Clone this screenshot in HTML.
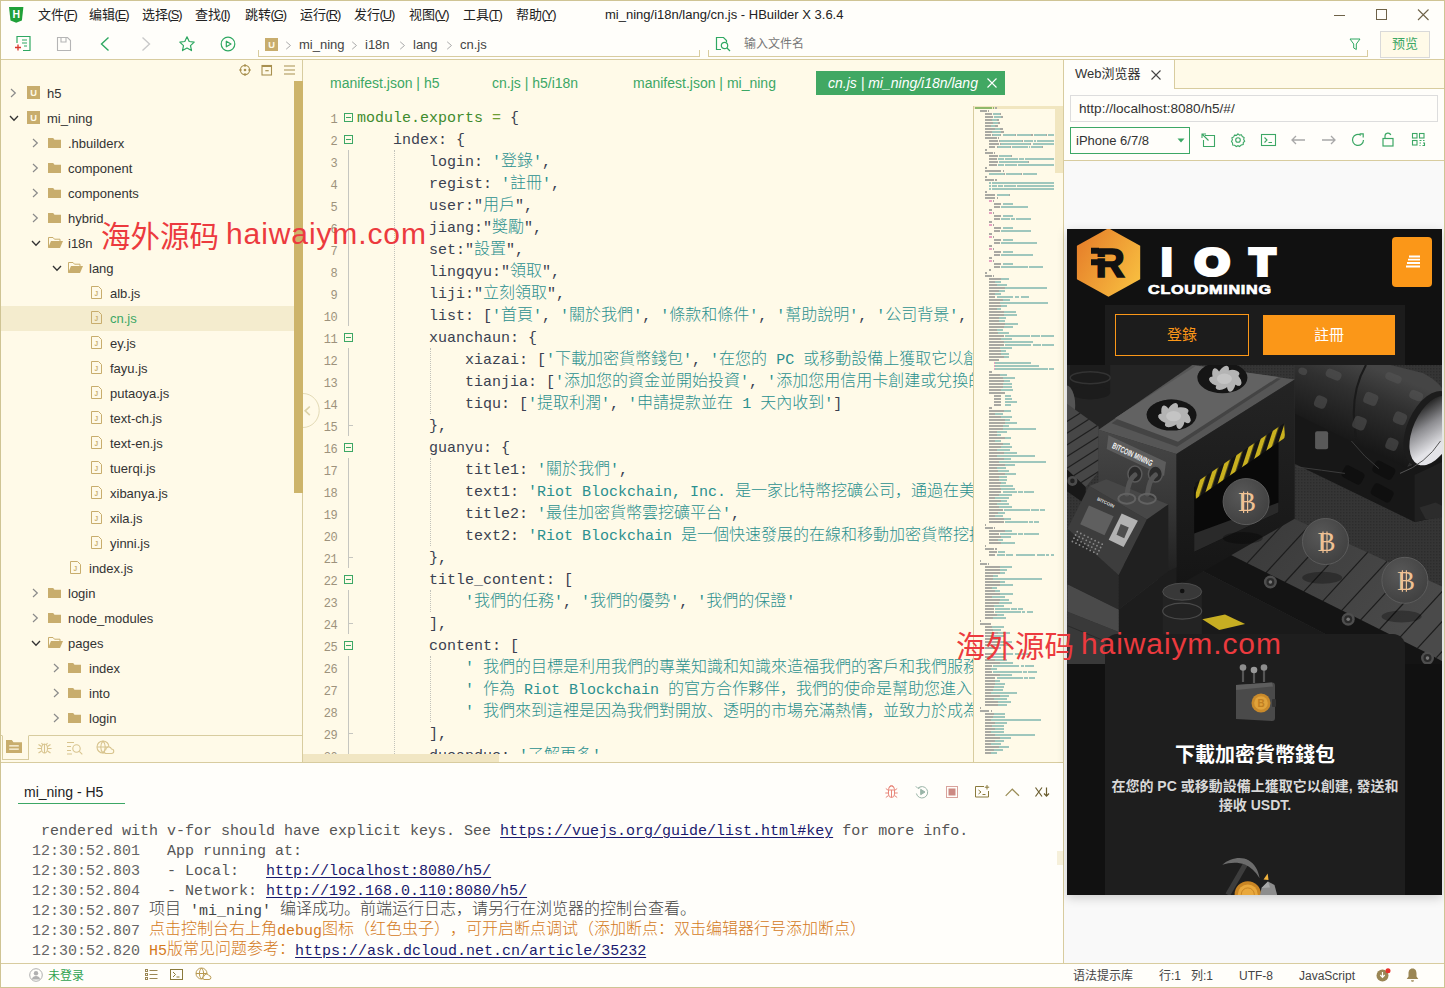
<!DOCTYPE html>
<html lang="zh"><head><meta charset="utf-8"><title>HBuilder X</title>
<style>

*{box-sizing:border-box;margin:0;padding:0}
html,body{width:1445px;height:988px;overflow:hidden;background:#fffefa}
body{font-family:"Liberation Sans","Noto Sans CJK SC",sans-serif;font-size:13px;color:#333}
#win{position:absolute;left:0;top:0;width:1445px;height:988px;overflow:hidden;background:#fffefa}
.abs{position:absolute}
.t{position:absolute;white-space:nowrap;line-height:20px;height:20px}
svg{position:absolute;overflow:visible}
.mono{font-family:"Liberation Mono","Noto Sans CJK TC",monospace}
/* window border */
#bt{left:0;top:0;width:1445px;height:1px;background:#cfc494}
#bl{left:0;top:0;width:1px;height:988px;background:#cfc494}
#br{left:1444px;top:0;width:1px;height:988px;background:#cfc494}
#bb{left:0;top:987px;width:1445px;height:1px;background:#cfc494}

#top{left:1px;top:1px;width:1443px;height:59px;background:#fffefa;border-bottom:1px solid #d8cc9f}
.menu{top:5px;font-size:13px;color:#222}
.menu span{letter-spacing:-1.1px;margin-left:-.5px}
.menu u{text-decoration:underline;text-underline-offset:1px}
#title{left:605px;top:5px;font-size:13px;color:#222}
.crumb{top:35px;font-size:13px;color:#444}
.sep{top:34px;font-size:13px;color:#999}
#crumbbox{left:258px;top:50px;width:442px;height:7px;border:1px solid #d8cc9f;border-top:none}
#searchbox{left:708px;top:50px;width:660px;height:7px;border:1px solid #d8cc9f;border-top:none}
#ph{left:744px;top:34px;font-size:12px;color:#777}
#preview{left:1380px;top:31px;width:50px;height:27px;background:#fffae8;border:1px solid #d9d9d9;color:#3ca765;font-size:13px;text-align:center;line-height:24px}

#left{left:1px;top:60px;width:302px;height:702px;background:#fffae8;border-right:1px solid #d8cc9f}
#sel{left:1px;top:306px;width:293px;height:25px;background:#f4ecce}
#lscroll{left:294px;top:81px;width:9px;height:412px;background:#cdb46a}
.tr{font-size:13px;color:#333}
#lbot{left:1px;top:735px;width:301px;height:27px;border-top:1px solid #d8cc9f;background:#fffae8}
#lbtab{left:2px;top:735px;width:27px;height:25px;background:#fffae8;border:1px solid #d8cc9f;border-top:1px solid #fffae8}
#lfoot{left:1px;top:762px;width:1062px;height:1px;background:#d8cc9f}

#ed{left:303px;top:60px;width:760px;height:702px;background:#fffae8}
.tab{top:73px;font-size:14px;color:#3ca765}
#atab{left:816px;top:71px;width:189px;height:24px;background:#41a863}
#atabt{left:828px;top:73px;font-size:14px;color:#fff;font-style:italic}
#code{left:304px;top:106px;width:669px;height:648px;overflow:hidden}
.ln{position:absolute;left:0;width:33px;text-align:right;font-size:12px;letter-spacing:-.600px;color:#9d927c;height:22px;line-height:28px;font-family:"Liberation Mono",monospace}
.cl{position:absolute;left:53px;margin-top:2px;white-space:pre;font-family:"Liberation Mono","Noto Sans CJK SC",monospace;font-size:15px;height:22px;line-height:22px;color:#3a4150}
.cl .k{text-spacing-trim:space-all;font-size:16px;line-height:0;position:relative;top:-.300px;font-weight:300;font-family:"Noto Sans CJK SC","Noto Sans CJK TC",sans-serif}
.s{color:#2b908f}
.g{color:#3e8b2e}
.o{color:#6f9d32}
.fb{position:absolute;left:40px;width:9px;height:9px;border:1px solid #3ca765;background:#fffae8;z-index:2}
.fb:after{content:"";position:absolute;left:1px;top:3px;width:5px;height:1px;background:#3ca765}
.fv{position:absolute;left:44px;width:1px;background:#c6c6c0}
.fe{position:absolute;left:44px;width:5px;height:1px;background:#c6c6c0}
.ig{position:absolute;width:0;border-left:1px dotted #c2c2ba}
#mmb{left:973px;top:106px;width:1px;height:656px;background:#d8cc9f}
#mmcur{left:974px;top:106px;width:81px;height:3px;background:#f1e6c0}
#mmth{left:1055px;top:106px;width:8px;height:67px;background:#f1e6c0}
#hs{left:303px;top:754px;width:670px;height:8px;background:#fffae8}
#hst{left:303px;top:754px;width:196px;height:8px;background:#f1e6c3}

#rp{left:1063px;top:60px;width:381px;height:903px;background:#f9f9f9;border-left:1px solid #d8cc9f}
#rtabs{left:1064px;top:60px;width:380px;height:29px;background:#fffae8;border-bottom:1px solid #d8cc9f}
#rtab{left:1064px;top:60px;width:111px;height:29px;background:#fffefa;border-right:1px solid #d8cc9f}
#rtabt{left:1075px;top:64px;font-size:13px;color:#333}
#rtool{left:1064px;top:89px;width:380px;height:72px;background:#fffefa;border-bottom:1px solid #d8cc9f}
#url{left:1070px;top:95px;width:368px;height:27px;border:1px solid #ddd;background:#fffefa;font-size:13.600px;color:#333;line-height:25px;padding-left:8px;white-space:nowrap}
#dev{left:1070px;top:127px;width:120px;height:27px;border:1px solid #3ca765;background:#fffefa;font-size:13px;color:#333;line-height:25px;padding-left:5px;white-space:nowrap}
#phone{left:1067px;top:229px;width:375px;height:666px;background:#111;overflow:hidden;box-shadow:0 3px 10px rgba(0,0,0,.180)}
#phone .abs,#phone .t{font-family:"Liberation Sans","Noto Sans CJK SC",sans-serif}
#iot{left:0;top:0;width:375px;height:70px}
#iot span{position:absolute;top:11.500px;font-size:36px;font-weight:bold;color:#fff;line-height:44px;height:44px;-webkit-text-stroke:4.200px #fff;transform-origin:0 50%;display:block}
#cm{left:81.200px;top:51.500px;font-size:13px;font-weight:bold;color:#fff;letter-spacing:.600px;line-height:18px;height:18px;-webkit-text-stroke:.700px #fff;transform:scaleX(1.240);transform-origin:0 50%}
#mbtn{left:325px;top:8px;width:40px;height:50px;background:#fb9718;border-radius:4px}
#bbar{left:38px;top:76px;width:300px;height:60px;background:#1c1c1c}
#blog{left:48px;top:85px;width:134px;height:42px;border:1px solid #fb9718;color:#fb9718;font-size:15px;text-align:center;line-height:40px}
#breg{left:196px;top:86px;width:132px;height:40px;background:#fb9718;color:#fff;font-size:15px;text-align:center;line-height:40px}
#card{left:38px;top:405px;width:300px;height:270px;background:#1e1e1e;border-radius:12px 12px 0 0}
#ctitle{left:38px;top:512px;width:300px;text-align:center;font-size:20px;font-weight:bold;color:#fff;line-height:28px;height:28px}
#cdesc{left:38px;top:548px;width:300px;text-align:center;font-size:14px;font-weight:bold;color:#d8d8d8;line-height:19px;height:40px;white-space:normal}

#con{left:1px;top:763px;width:1062px;height:200px;background:#fffefa}
#ctab{left:24px;top:782px;font-size:14px;color:#222}
#ctabu{left:18px;top:803px;width:107px;height:1px;background:#3ca765}
.lg{position:absolute;left:32px;white-space:pre;font-family:"Liberation Mono","Noto Sans CJK SC",monospace;font-size:15px;height:20px;line-height:20px;color:#555}
.lg .k{text-spacing-trim:space-all;font-weight:300;font-size:16px;line-height:0;position:relative;top:-1px;font-family:"Noto Sans CJK SC",sans-serif}
.lg a{color:#1a1a6e;text-decoration:underline;text-underline-offset:2px}
.lg .tm{color:#666}
.lg .or{color:#d47a1c}
.lg .dk{color:#444}
#status{left:1px;top:963px;width:1443px;height:24px;background:#fffefa;border-top:1px solid #d8cc9f}
.st{top:966px;font-size:12px;color:#444}
.wc{font-size:29.5px!important;letter-spacing:0!important}
.wm{position:absolute;white-space:nowrap;font-size:30px;letter-spacing:.9px;color:#ec3a3e;line-height:36px;height:36px;font-family:"Liberation Sans","Noto Sans CJK SC",sans-serif}
#cscr{left:1057px;top:851px;width:6px;height:14px;background:#f6f0da}

</style></head>
<body>
<div id="win">
<div class="abs" id="top"></div>
<svg style="left:9.300px;top:7px" width="14.400" height="15.800" viewBox="0 0 14.400 15.800"><path d="M0 0h14.400l-1.500 13.600-5.700 2.200-5.700-2.200z" fill="#1fa038"/><text x="7.200" y="11.300" font-size="10.500" font-weight="bold" fill="#fff" text-anchor="middle" font-family="Liberation Sans,sans-serif">H</text></svg>
<div class="t menu" style="left:38px">文件<span>(<u>F</u>)</span></div>
<div class="t menu" style="left:89px">编辑<span>(<u>E</u>)</span></div>
<div class="t menu" style="left:142px">选择<span>(<u>S</u>)</span></div>
<div class="t menu" style="left:195px">查找<span>(<u>I</u>)</span></div>
<div class="t menu" style="left:245px">跳转<span>(<u>G</u>)</span></div>
<div class="t menu" style="left:300px">运行<span>(<u>R</u>)</span></div>
<div class="t menu" style="left:354px">发行<span>(<u>U</u>)</span></div>
<div class="t menu" style="left:409px">视图<span>(<u>V</u>)</span></div>
<div class="t menu" style="left:463px">工具<span>(<u>T</u>)</span></div>
<div class="t menu" style="left:516px">帮助<span>(<u>Y</u>)</span></div>
<div class="t" id="title">mi_ning/i18n/lang/cn.js - HBuilder X 3.6.4</div>
<svg style="left:1334px;top:8px" width="100" height="14" viewBox="0 0 100 14"><path d="M0 7.5h11" stroke="#6e6248" stroke-width="1"/><rect x="42.5" y="1.5" width="10" height="10" fill="none" stroke="#6e6248" stroke-width="1"/><path d="M84 1.5l10.5 10.5M94.5 1.5l-10.5 10.5" stroke="#6e6248" stroke-width="1.1"/></svg>
<svg style="left:14px;top:35px" width="18" height="18" viewBox="0 0 18 18" fill="none"><path d="M3 8V1.5h13v14H9" stroke="#2fa862" stroke-width="1.2"/><path d="M8 5h5M8 8h5M10 11h3" stroke="#2fa862" stroke-width="1.1"/><path d="M1 12.5h6M4 9.5v6" stroke="#d9342b" stroke-width="1.3"/></svg>
<svg style="left:56px;top:36px" width="16" height="16" viewBox="0 0 16 16" fill="none"><path d="M1.5 1.5h10l3 3v10h-13z" stroke="#b5b5b5" stroke-width="1.1"/><path d="M5 1.5v4.5h5V1.5" stroke="#b5b5b5" stroke-width="1.1"/></svg>
<svg style="left:99px;top:36px" width="12" height="16" viewBox="0 0 12 16" fill="none"><path d="M9.5 1.5L2.5 8l7 6.5" stroke="#2fa862" stroke-width="1.4"/></svg>
<svg style="left:140px;top:36px" width="12" height="16" viewBox="0 0 12 16" fill="none"><path d="M2.5 1.5L9.5 8l-7 6.5" stroke="#c9c9c9" stroke-width="1.4"/></svg>
<svg style="left:178px;top:35px" width="18" height="18" viewBox="0 0 18 18" fill="none"><path d="M9 1.8l2.2 4.7 5 .6-3.7 3.5 1 5-4.5-2.5-4.5 2.5 1-5L1.8 7.1l5-.6z" stroke="#2fa862" stroke-width="1.2" stroke-linejoin="round"/></svg>
<svg style="left:220px;top:36px" width="16" height="16" viewBox="0 0 16 16" fill="none"><circle cx="8" cy="8" r="6.8" stroke="#2fa862" stroke-width="1.2"/><path d="M6.3 5.2v5.6L11 8z" stroke="#2fa862" stroke-width="1.2" stroke-linejoin="round"/></svg>
<div class="abs" id="crumbbox"></div><div class="abs" id="searchbox"></div>
<svg style="left:265px;top:37.500px" width="13" height="13" viewBox="0 0 14 14"><rect width="14" height="14" fill="#c8ad6d"/><text x="7" y="10.800" font-size="10" font-weight="bold" fill="#fffae8" text-anchor="middle" font-family="Liberation Sans,sans-serif">U</text></svg>
<div class="t crumb" style="left:299px">mi_ning</div><div class="t crumb" style="left:365px">i18n</div><div class="t crumb" style="left:413px">lang</div><div class="t crumb" style="left:460px">cn.js</div><svg style="left:285px;top:40.500px" width="7" height="9" viewBox="0 0 7 9" fill="none"><path d="M1.200 0.800l4.300 3.700-4.300 3.700" stroke="#aaa" stroke-width="1"/></svg><svg style="left:351px;top:40.500px" width="7" height="9" viewBox="0 0 7 9" fill="none"><path d="M1.200 0.800l4.300 3.700-4.300 3.700" stroke="#aaa" stroke-width="1"/></svg><svg style="left:399px;top:40.500px" width="7" height="9" viewBox="0 0 7 9" fill="none"><path d="M1.200 0.800l4.300 3.700-4.300 3.700" stroke="#aaa" stroke-width="1"/></svg><svg style="left:446px;top:40.500px" width="7" height="9" viewBox="0 0 7 9" fill="none"><path d="M1.200 0.800l4.300 3.700-4.300 3.700" stroke="#aaa" stroke-width="1"/></svg>
<svg style="left:715px;top:36px" width="17" height="16" viewBox="0 0 17 16" fill="none"><path d="M6 13.5H1.5v-12h7l3 3V6" stroke="#2fa862" stroke-width="1.2"/><circle cx="9.5" cy="9.5" r="3.2" stroke="#2fa862" stroke-width="1.2"/><path d="M12 12l3 3" stroke="#2fa862" stroke-width="1.2"/></svg>
<div class="t" id="ph">输入文件名</div>
<svg style="left:1349px;top:38px" width="12" height="13" viewBox="0 0 12 13" fill="none"><path d="M1 1h10L7.3 6v5.5L4.7 10V6z" stroke="#2fa862" stroke-width="1"/></svg>
<div class="abs" id="preview">预览</div>
<div class="abs" id="left"></div><div class="abs" id="sel"></div><div class="abs" id="lscroll"></div>
<svg style="left:239px;top:64px" width="12" height="12" viewBox="0 0 12 12" fill="none"><circle cx="6" cy="6" r="4.6" stroke="#a89050" stroke-width="1.1"/><circle cx="6" cy="6" r="1.3" fill="#a89050"/><path d="M6 0v3M6 9v3M0 6h3M9 6h3" stroke="#a89050" stroke-width="1.1"/></svg>
<svg style="left:261px;top:64px" width="12" height="12" viewBox="0 0 12 12" fill="none"><rect x="1" y="1.5" width="9.5" height="9.5" stroke="#a89050" stroke-width="1.1"/><path d="M1 2h9.5" stroke="#a89050" stroke-width="2"/><path d="M4.3 6.7h3.4" stroke="#a89050" stroke-width="1.2"/></svg>
<svg style="left:284px;top:65px" width="11" height="10" viewBox="0 0 11 10" fill="none"><path d="M0 1h11M0 5h11M0 9h11" stroke="#a89050" stroke-width="1.2"/></svg>
<svg style="left:10px;top:88px" width="7" height="10" viewBox="0 0 7 10" fill="none"><path d="M1 1l4.3 4L1 9" stroke="#8a8a8a" stroke-width="1.2"/></svg><svg style="left:27px;top:86px" width="13" height="13" viewBox="0 0 14 14"><rect width="14" height="14" fill="#c8ad6d"/><text x="7" y="10.800" font-size="10" font-weight="bold" fill="#fffae8" text-anchor="middle" font-family="Liberation Sans,sans-serif">U</text></svg><div class="t tr" style="left:47px;top:84px">h5</div>
<svg style="left:9px;top:115px" width="10" height="7" viewBox="0 0 10 7" fill="none"><path d="M1 1l4 4.3L9 1" stroke="#333" stroke-width="1.3"/></svg><svg style="left:27px;top:111px" width="13" height="13" viewBox="0 0 14 14"><rect width="14" height="14" fill="#c8ad6d"/><text x="7" y="10.800" font-size="10" font-weight="bold" fill="#fffae8" text-anchor="middle" font-family="Liberation Sans,sans-serif">U</text></svg><div class="t tr" style="left:47px;top:109px">mi_ning</div>
<svg style="left:32px;top:138px" width="7" height="10" viewBox="0 0 7 10" fill="none"><path d="M1 1l4.3 4L1 9" stroke="#8a8a8a" stroke-width="1.2"/></svg><svg style="left:48px;top:138px" width="13" height="10" viewBox="0 0 13 10"><path d="M0 0h5.2l1.3 1.8H13V10H0z" fill="#c8ad6d"/></svg><div class="t tr" style="left:68px;top:134px">.hbuilderx</div>
<svg style="left:32px;top:163px" width="7" height="10" viewBox="0 0 7 10" fill="none"><path d="M1 1l4.3 4L1 9" stroke="#8a8a8a" stroke-width="1.2"/></svg><svg style="left:48px;top:163px" width="13" height="10" viewBox="0 0 13 10"><path d="M0 0h5.2l1.3 1.8H13V10H0z" fill="#c8ad6d"/></svg><div class="t tr" style="left:68px;top:159px">component</div>
<svg style="left:32px;top:188px" width="7" height="10" viewBox="0 0 7 10" fill="none"><path d="M1 1l4.3 4L1 9" stroke="#8a8a8a" stroke-width="1.2"/></svg><svg style="left:48px;top:188px" width="13" height="10" viewBox="0 0 13 10"><path d="M0 0h5.2l1.3 1.8H13V10H0z" fill="#c8ad6d"/></svg><div class="t tr" style="left:68px;top:184px">components</div>
<svg style="left:32px;top:213px" width="7" height="10" viewBox="0 0 7 10" fill="none"><path d="M1 1l4.3 4L1 9" stroke="#8a8a8a" stroke-width="1.2"/></svg><svg style="left:48px;top:213px" width="13" height="10" viewBox="0 0 13 10"><path d="M0 0h5.2l1.3 1.8H13V10H0z" fill="#c8ad6d"/></svg><div class="t tr" style="left:68px;top:209px">hybrid</div>
<svg style="left:31px;top:240px" width="10" height="7" viewBox="0 0 10 7" fill="none"><path d="M1 1l4 4.3L9 1" stroke="#333" stroke-width="1.3"/></svg><svg style="left:48px;top:237px" width="15" height="11" viewBox="0 0 15 11"><path d="M0.5 10.5V0.5h4.5l1.5 1.7h5.5v2" fill="none" stroke="#c8ad6d" stroke-width="1"/><path d="M0 11L3 4h12L12 11z" fill="#c8ad6d"/></svg><div class="t tr" style="left:68px;top:234px">i18n</div>
<svg style="left:52px;top:265px" width="10" height="7" viewBox="0 0 10 7" fill="none"><path d="M1 1l4 4.3L9 1" stroke="#333" stroke-width="1.3"/></svg><svg style="left:68px;top:262px" width="15" height="11" viewBox="0 0 15 11"><path d="M0.5 10.5V0.5h4.5l1.5 1.7h5.5v2" fill="none" stroke="#c8ad6d" stroke-width="1"/><path d="M0 11L3 4h12L12 11z" fill="#c8ad6d"/></svg><div class="t tr" style="left:89px;top:259px">lang</div>
<svg style="left:91px;top:286px" width="11" height="13" viewBox="0 0 11 13" fill="none"><path d="M0.5 0.5h7l3 3v9h-10z" stroke="#c8ad6d" stroke-width="1"/><text x="5.300" y="9.600" font-size="6.500" font-weight="bold" fill="#c8ad6d" stroke="none" text-anchor="middle" font-family="Liberation Sans,sans-serif">J</text></svg><div class="t tr" style="left:110px;top:284px">alb.js</div>
<svg style="left:91px;top:311px" width="11" height="13" viewBox="0 0 11 13" fill="none"><path d="M0.5 0.5h7l3 3v9h-10z" stroke="#c8ad6d" stroke-width="1"/><text x="5.300" y="9.600" font-size="6.500" font-weight="bold" fill="#c8ad6d" stroke="none" text-anchor="middle" font-family="Liberation Sans,sans-serif">J</text></svg><div class="t tr" style="left:110px;top:309px;color:#3ca765">cn.js</div>
<svg style="left:91px;top:336px" width="11" height="13" viewBox="0 0 11 13" fill="none"><path d="M0.5 0.5h7l3 3v9h-10z" stroke="#c8ad6d" stroke-width="1"/><text x="5.300" y="9.600" font-size="6.500" font-weight="bold" fill="#c8ad6d" stroke="none" text-anchor="middle" font-family="Liberation Sans,sans-serif">J</text></svg><div class="t tr" style="left:110px;top:334px">ey.js</div>
<svg style="left:91px;top:361px" width="11" height="13" viewBox="0 0 11 13" fill="none"><path d="M0.5 0.5h7l3 3v9h-10z" stroke="#c8ad6d" stroke-width="1"/><text x="5.300" y="9.600" font-size="6.500" font-weight="bold" fill="#c8ad6d" stroke="none" text-anchor="middle" font-family="Liberation Sans,sans-serif">J</text></svg><div class="t tr" style="left:110px;top:359px">fayu.js</div>
<svg style="left:91px;top:386px" width="11" height="13" viewBox="0 0 11 13" fill="none"><path d="M0.5 0.5h7l3 3v9h-10z" stroke="#c8ad6d" stroke-width="1"/><text x="5.300" y="9.600" font-size="6.500" font-weight="bold" fill="#c8ad6d" stroke="none" text-anchor="middle" font-family="Liberation Sans,sans-serif">J</text></svg><div class="t tr" style="left:110px;top:384px">putaoya.js</div>
<svg style="left:91px;top:411px" width="11" height="13" viewBox="0 0 11 13" fill="none"><path d="M0.5 0.5h7l3 3v9h-10z" stroke="#c8ad6d" stroke-width="1"/><text x="5.300" y="9.600" font-size="6.500" font-weight="bold" fill="#c8ad6d" stroke="none" text-anchor="middle" font-family="Liberation Sans,sans-serif">J</text></svg><div class="t tr" style="left:110px;top:409px">text-ch.js</div>
<svg style="left:91px;top:436px" width="11" height="13" viewBox="0 0 11 13" fill="none"><path d="M0.5 0.5h7l3 3v9h-10z" stroke="#c8ad6d" stroke-width="1"/><text x="5.300" y="9.600" font-size="6.500" font-weight="bold" fill="#c8ad6d" stroke="none" text-anchor="middle" font-family="Liberation Sans,sans-serif">J</text></svg><div class="t tr" style="left:110px;top:434px">text-en.js</div>
<svg style="left:91px;top:461px" width="11" height="13" viewBox="0 0 11 13" fill="none"><path d="M0.5 0.5h7l3 3v9h-10z" stroke="#c8ad6d" stroke-width="1"/><text x="5.300" y="9.600" font-size="6.500" font-weight="bold" fill="#c8ad6d" stroke="none" text-anchor="middle" font-family="Liberation Sans,sans-serif">J</text></svg><div class="t tr" style="left:110px;top:459px">tuerqi.js</div>
<svg style="left:91px;top:486px" width="11" height="13" viewBox="0 0 11 13" fill="none"><path d="M0.5 0.5h7l3 3v9h-10z" stroke="#c8ad6d" stroke-width="1"/><text x="5.300" y="9.600" font-size="6.500" font-weight="bold" fill="#c8ad6d" stroke="none" text-anchor="middle" font-family="Liberation Sans,sans-serif">J</text></svg><div class="t tr" style="left:110px;top:484px">xibanya.js</div>
<svg style="left:91px;top:511px" width="11" height="13" viewBox="0 0 11 13" fill="none"><path d="M0.5 0.5h7l3 3v9h-10z" stroke="#c8ad6d" stroke-width="1"/><text x="5.300" y="9.600" font-size="6.500" font-weight="bold" fill="#c8ad6d" stroke="none" text-anchor="middle" font-family="Liberation Sans,sans-serif">J</text></svg><div class="t tr" style="left:110px;top:509px">xila.js</div>
<svg style="left:91px;top:536px" width="11" height="13" viewBox="0 0 11 13" fill="none"><path d="M0.5 0.5h7l3 3v9h-10z" stroke="#c8ad6d" stroke-width="1"/><text x="5.300" y="9.600" font-size="6.500" font-weight="bold" fill="#c8ad6d" stroke="none" text-anchor="middle" font-family="Liberation Sans,sans-serif">J</text></svg><div class="t tr" style="left:110px;top:534px">yinni.js</div>
<svg style="left:70px;top:561px" width="11" height="13" viewBox="0 0 11 13" fill="none"><path d="M0.5 0.5h7l3 3v9h-10z" stroke="#c8ad6d" stroke-width="1"/><text x="5.300" y="9.600" font-size="6.500" font-weight="bold" fill="#c8ad6d" stroke="none" text-anchor="middle" font-family="Liberation Sans,sans-serif">J</text></svg><div class="t tr" style="left:89px;top:559px">index.js</div>
<svg style="left:32px;top:588px" width="7" height="10" viewBox="0 0 7 10" fill="none"><path d="M1 1l4.3 4L1 9" stroke="#8a8a8a" stroke-width="1.2"/></svg><svg style="left:48px;top:588px" width="13" height="10" viewBox="0 0 13 10"><path d="M0 0h5.2l1.3 1.8H13V10H0z" fill="#c8ad6d"/></svg><div class="t tr" style="left:68px;top:584px">login</div>
<svg style="left:32px;top:613px" width="7" height="10" viewBox="0 0 7 10" fill="none"><path d="M1 1l4.3 4L1 9" stroke="#8a8a8a" stroke-width="1.2"/></svg><svg style="left:48px;top:613px" width="13" height="10" viewBox="0 0 13 10"><path d="M0 0h5.2l1.3 1.8H13V10H0z" fill="#c8ad6d"/></svg><div class="t tr" style="left:68px;top:609px">node_modules</div>
<svg style="left:31px;top:640px" width="10" height="7" viewBox="0 0 10 7" fill="none"><path d="M1 1l4 4.3L9 1" stroke="#333" stroke-width="1.3"/></svg><svg style="left:48px;top:637px" width="15" height="11" viewBox="0 0 15 11"><path d="M0.5 10.5V0.5h4.5l1.5 1.7h5.5v2" fill="none" stroke="#c8ad6d" stroke-width="1"/><path d="M0 11L3 4h12L12 11z" fill="#c8ad6d"/></svg><div class="t tr" style="left:68px;top:634px">pages</div>
<svg style="left:53px;top:663px" width="7" height="10" viewBox="0 0 7 10" fill="none"><path d="M1 1l4.3 4L1 9" stroke="#8a8a8a" stroke-width="1.2"/></svg><svg style="left:68px;top:663px" width="13" height="10" viewBox="0 0 13 10"><path d="M0 0h5.2l1.3 1.8H13V10H0z" fill="#c8ad6d"/></svg><div class="t tr" style="left:89px;top:659px">index</div>
<svg style="left:53px;top:688px" width="7" height="10" viewBox="0 0 7 10" fill="none"><path d="M1 1l4.3 4L1 9" stroke="#8a8a8a" stroke-width="1.2"/></svg><svg style="left:68px;top:688px" width="13" height="10" viewBox="0 0 13 10"><path d="M0 0h5.2l1.3 1.8H13V10H0z" fill="#c8ad6d"/></svg><div class="t tr" style="left:89px;top:684px">into</div>
<svg style="left:53px;top:713px" width="7" height="10" viewBox="0 0 7 10" fill="none"><path d="M1 1l4.3 4L1 9" stroke="#8a8a8a" stroke-width="1.2"/></svg><svg style="left:68px;top:713px" width="13" height="10" viewBox="0 0 13 10"><path d="M0 0h5.2l1.3 1.8H13V10H0z" fill="#c8ad6d"/></svg><div class="t tr" style="left:89px;top:709px">login</div>
<div class="abs" id="lbot"></div><div class="abs" id="lbtab"></div><div class="abs" id="lfoot"></div>
<svg style="left:6px;top:740px" width="16" height="13" viewBox="0 0 15 12"><path d="M0 0h5.5l1.5 2H15v10H0z" fill="#c8ad6d"/><path d="M3 5.5h9M3 8.5h9" stroke="#fffae8" stroke-width="1.2"/></svg>
<svg style="left:37px;top:740px" width="15" height="15" viewBox="0 0 15 15" fill="none" stroke="#d8c48e" stroke-width="1.1"><ellipse cx="7.5" cy="8.5" rx="3" ry="4.5"/><path d="M7.5 4v9M4.5 3l1.5 2M10.500 3l-1.5 2M0.500 8.500h4M10.500 8.500h4M1.500 4.500l3 2M13.500 4.500l-3 2M1.500 13l3-2M13.500 13l-3-2"/></svg>
<svg style="left:67px;top:741px" width="16" height="14" viewBox="0 0 16 14" fill="none" stroke="#d8c48e" stroke-width="1.1"><path d="M0 1.500h7M0 5.500h4M0 9.500h4M0 13h5"/><circle cx="9.500" cy="7.500" r="3.700"/><path d="M12.300 10.300l3 3"/></svg>
<svg style="left:96px;top:740px" width="18" height="15" viewBox="0 0 18 15" fill="none" stroke="#d8c48e" stroke-width="1.1"><circle cx="7" cy="7" r="6"/><path d="M1 7h12M7 1c-3 3-3 9 0 12M7 1c3 3 3 9 0 12"/><path d="M9.500 13.500h6a2 2 0 0 0 0-4.500a3 3 0 0 0-5.800 0.800a2 2 0 0 0-0.200 3.700z" fill="#fffae8"/></svg>
<div class="abs" id="ed"></div>
<div class="t tab" style="left:330px">manifest.json | h5</div><div class="t tab" style="left:492px">cn.js | h5/i18n</div><div class="t tab" style="left:633px">manifest.json | mi_ning</div>
<div class="abs" id="atab"></div><div class="t" id="atabt">cn.js | mi_ning/i18n/lang</div><svg style="left:987px;top:78px" width="10" height="10" viewBox="0 0 10 10"><path d="M0.500 0.500l9 9M9.500 0.500l-9 9" stroke="#fff" stroke-width="1.1"/></svg>
<div class="abs" id="code"><div class="ln" style="top:0px">1</div><div class="fb" style="top:7px"></div><div class="cl" style="top:0px"><span class="g">module.exports</span> <span class="o">=</span> {</div>
<div class="ln" style="top:22px">2</div><div class="fb" style="top:29px"></div><div class="cl" style="top:22px">    index: {</div>
<div class="ln" style="top:44px">3</div><div class="cl" style="top:44px">        login: <span class="s">'<span class="k">登錄</span>'</span>,</div>
<div class="ln" style="top:66px">4</div><div class="cl" style="top:66px">        regist: <span class="s">'<span class="k">註冊</span>'</span>,</div>
<div class="ln" style="top:88px">5</div><div class="cl" style="top:88px">        user:"<span class="s"><span class="k">用戶</span></span>",</div>
<div class="ln" style="top:110px">6</div><div class="cl" style="top:110px">        jiang:"<span class="s"><span class="k">獎勵</span></span>",</div>
<div class="ln" style="top:132px">7</div><div class="cl" style="top:132px">        set:"<span class="s"><span class="k">設置</span></span>",</div>
<div class="ln" style="top:154px">8</div><div class="cl" style="top:154px">        lingqyu:"<span class="s"><span class="k">領取</span></span>",</div>
<div class="ln" style="top:176px">9</div><div class="cl" style="top:176px">        liji:"<span class="s"><span class="k">立刻領取</span></span>",</div>
<div class="ln" style="top:198px">10</div><div class="cl" style="top:198px">        list: [<span class="s">'<span class="k">首頁</span>'</span>, <span class="s">'<span class="k">關於我們</span>'</span>, <span class="s">'<span class="k">條款和條件</span>'</span>, <span class="s">'<span class="k">幫助說明</span>'</span>, <span class="s">'<span class="k">公司背景</span>'</span>, <span class="s">'<span class="k">條款和條件</span>'</span>, <span class="s">'<span class="k">幫助說明</span>'</span>],</div>
<div class="ln" style="top:220px">11</div><div class="fb" style="top:227px"></div><div class="cl" style="top:220px">        xuanchaun: {</div>
<div class="ln" style="top:242px">12</div><div class="cl" style="top:242px">            xiazai: [<span class="s">'<span class="k">下載加密貨幣錢包</span>'</span>, <span class="s">'<span class="k">在您的</span> PC <span class="k">或移動設備上獲取它以創建</span>, <span class="k">發送和接收</span> USDT.'</span>],</div>
<div class="ln" style="top:264px">13</div><div class="cl" style="top:264px">            tianjia: [<span class="s">'<span class="k">添加您的資金並開始投資</span>'</span>, <span class="s">'<span class="k">添加您用信用卡創建或兌換的資金</span>, <span class="k">並開始投資</span>'</span>],</div>
<div class="ln" style="top:286px">14</div><div class="cl" style="top:286px">            tiqu: [<span class="s">'<span class="k">提取利潤</span>'</span>, <span class="s">'<span class="k">申請提款並在</span> 1 <span class="k">天內收到</span>'</span>]</div>
<div class="ln" style="top:308px">15</div><div class="fe" style="top:319px"></div><div class="cl" style="top:308px">        },</div>
<div class="ln" style="top:330px">16</div><div class="fb" style="top:337px"></div><div class="cl" style="top:330px">        guanyu: {</div>
<div class="ln" style="top:352px">17</div><div class="cl" style="top:352px">            title1: <span class="s">'<span class="k">關於我們</span>'</span>,</div>
<div class="ln" style="top:374px">18</div><div class="cl" style="top:374px">            text1: <span class="s">'Riot Blockchain, Inc. <span class="k">是一家比特幣挖礦公司，通過在美國擴大大規模挖礦，支持比特幣區塊鏈</span>',</span></div>
<div class="ln" style="top:396px">19</div><div class="cl" style="top:396px">            title2: <span class="s">'<span class="k">最佳加密貨幣雲挖礦平台</span>'</span>,</div>
<div class="ln" style="top:418px">20</div><div class="cl" style="top:418px">            text2: <span class="s">'Riot Blockchain <span class="k">是一個快速發展的在線和移動加密貨幣挖掘平台，允許用戶挖掘加密貨幣</span>',</span></div>
<div class="ln" style="top:440px">21</div><div class="fe" style="top:451px"></div><div class="cl" style="top:440px">        },</div>
<div class="ln" style="top:462px">22</div><div class="fb" style="top:469px"></div><div class="cl" style="top:462px">        title_content: [</div>
<div class="ln" style="top:484px">23</div><div class="cl" style="top:484px">            <span class="s">'<span class="k">我們的任務</span>'</span>, <span class="s">'<span class="k">我們的優勢</span>'</span>, <span class="s">'<span class="k">我們的保證</span>'</span></div>
<div class="ln" style="top:506px">24</div><div class="fe" style="top:517px"></div><div class="cl" style="top:506px">        ],</div>
<div class="ln" style="top:528px">25</div><div class="fb" style="top:535px"></div><div class="cl" style="top:528px">        content: [</div>
<div class="ln" style="top:550px">26</div><div class="cl" style="top:550px">            <span class="s">' <span class="k">我們的目標是利用我們的專業知識和知識來造福我們的客戶和我們服務的全球社區。</span>',</span></div>
<div class="ln" style="top:572px">27</div><div class="cl" style="top:572px">            <span class="s">' <span class="k">作為</span> Riot Blockchain <span class="k">的官方合作夥伴，我們的使命是幫助您進入並更好地了解加密貨幣世界</span>',</span></div>
<div class="ln" style="top:594px">28</div><div class="cl" style="top:594px">            <span class="s">' <span class="k">我們來到這裡是因為我們對開放、透明的市場充滿熱情，並致力於成為值得信賴的合作夥伴</span>',</span></div>
<div class="ln" style="top:616px">29</div><div class="fe" style="top:627px"></div><div class="cl" style="top:616px">        ],</div>
<div class="ln" style="top:638px">30</div><div class="cl" style="top:638px">        duoanduo: <span class="s">'<span class="k">了解更多</span>'</span>,</div>
<div class="fv" style="top:44px;height:176px"></div><div class="fv" style="top:242px;height:88px"></div><div class="fv" style="top:352px;height:110px"></div><div class="fv" style="top:484px;height:44px"></div><div class="fv" style="top:550px;height:110px"></div><div class="ig" style="left:90px;top:44px;height:610px"></div><div class="ig" style="left:126px;top:242px;height:66px"></div><div class="ig" style="left:126px;top:352px;height:88px"></div><div class="ig" style="left:126px;top:484px;height:22px"></div><div class="ig" style="left:126px;top:550px;height:66px"></div></div>
<div class="abs" id="mmb"></div><div class="abs" id="mmcur"></div><div class="abs" id="mmth"></div><div class="abs" id="hs"></div><div class="abs" id="hst"></div>
<svg style="left:0;top:0" width="1445" height="988" viewBox="0 0 1445 988" shape-rendering="crispEdges"><rect x="975.0" y="107" width="16.8" height="2" fill="#8fb86a"/><rect x="993.0" y="107" width="1.2" height="2" fill="#8fb86a"/><rect x="995.4" y="107" width="1.2" height="2" fill="#a9a9a3"/><rect x="979.8" y="110" width="7.2" height="2" fill="#a9a9a3"/><rect x="988.2" y="110" width="1.2" height="2" fill="#a9a9a3"/><rect x="984.6" y="113" width="7.2" height="2" fill="#a9a9a3"/><rect x="993.0" y="113" width="7.2" height="2" fill="#9fc7bd"/><rect x="1000.2" y="113" width="1.2" height="2" fill="#a9a9a3"/><rect x="984.6" y="116" width="8.4" height="2" fill="#a9a9a3"/><rect x="994.2" y="116" width="7.2" height="2" fill="#9fc7bd"/><rect x="1001.4" y="116" width="1.2" height="2" fill="#a9a9a3"/><rect x="984.6" y="119" width="7.2" height="2" fill="#a9a9a3"/><rect x="991.8" y="119" width="4.8" height="2" fill="#9fc7bd"/><rect x="996.6" y="119" width="2.4" height="2" fill="#a9a9a3"/><rect x="984.6" y="122" width="8.4" height="2" fill="#a9a9a3"/><rect x="993.0" y="122" width="4.8" height="2" fill="#9fc7bd"/><rect x="997.8" y="122" width="2.4" height="2" fill="#a9a9a3"/><rect x="984.6" y="125" width="6.0" height="2" fill="#a9a9a3"/><rect x="990.6" y="125" width="4.8" height="2" fill="#9fc7bd"/><rect x="995.4" y="125" width="2.4" height="2" fill="#a9a9a3"/><rect x="984.6" y="128" width="10.8" height="2" fill="#a9a9a3"/><rect x="995.4" y="128" width="4.8" height="2" fill="#9fc7bd"/><rect x="1000.2" y="128" width="2.4" height="2" fill="#a9a9a3"/><rect x="984.6" y="131" width="7.2" height="2" fill="#a9a9a3"/><rect x="991.8" y="131" width="9.6" height="2" fill="#9fc7bd"/><rect x="1001.4" y="131" width="2.4" height="2" fill="#a9a9a3"/><rect x="984.6" y="134" width="6.0" height="2" fill="#a9a9a3"/><rect x="991.8" y="134" width="1.2" height="2" fill="#a9a9a3"/><rect x="993.0" y="134" width="7.2" height="2" fill="#9fc7bd"/><rect x="1000.2" y="134" width="1.2" height="2" fill="#a9a9a3"/><rect x="1002.6" y="134" width="12.0" height="2" fill="#9fc7bd"/><rect x="1014.6" y="134" width="1.2" height="2" fill="#a9a9a3"/><rect x="1017.0" y="134" width="14.4" height="2" fill="#9fc7bd"/><rect x="1031.4" y="134" width="1.2" height="2" fill="#a9a9a3"/><rect x="1033.8" y="134" width="12.0" height="2" fill="#9fc7bd"/><rect x="1045.8" y="134" width="1.2" height="2" fill="#a9a9a3"/><rect x="1048.2" y="134" width="5.8" height="2" fill="#9fc7bd"/><rect x="984.6" y="137" width="12.0" height="2" fill="#a9a9a3"/><rect x="997.8" y="137" width="1.2" height="2" fill="#a9a9a3"/><rect x="989.4" y="140" width="8.4" height="2" fill="#a9a9a3"/><rect x="999.0" y="140" width="1.2" height="2" fill="#a9a9a3"/><rect x="1000.2" y="140" width="21.6" height="2" fill="#9fc7bd"/><rect x="1021.8" y="140" width="1.2" height="2" fill="#a9a9a3"/><rect x="1024.2" y="140" width="8.4" height="2" fill="#9fc7bd"/><rect x="1033.8" y="140" width="2.4" height="2" fill="#9fc7bd"/><rect x="1037.4" y="140" width="16.6" height="2" fill="#9fc7bd"/><rect x="989.4" y="143" width="9.6" height="2" fill="#a9a9a3"/><rect x="1000.2" y="143" width="1.2" height="2" fill="#a9a9a3"/><rect x="1001.4" y="143" width="28.8" height="2" fill="#9fc7bd"/><rect x="1030.2" y="143" width="1.2" height="2" fill="#a9a9a3"/><rect x="1032.6" y="143" width="21.4" height="2" fill="#9fc7bd"/><rect x="989.4" y="146" width="6.0" height="2" fill="#a9a9a3"/><rect x="996.6" y="146" width="1.2" height="2" fill="#a9a9a3"/><rect x="997.8" y="146" width="12.0" height="2" fill="#9fc7bd"/><rect x="1009.8" y="146" width="1.2" height="2" fill="#a9a9a3"/><rect x="1012.2" y="146" width="15.6" height="2" fill="#9fc7bd"/><rect x="1029.0" y="146" width="1.2" height="2" fill="#9fc7bd"/><rect x="1031.4" y="146" width="10.8" height="2" fill="#9fc7bd"/><rect x="1042.2" y="146" width="1.2" height="2" fill="#a9a9a3"/><rect x="984.6" y="149" width="2.4" height="2" fill="#a9a9a3"/><rect x="984.6" y="152" width="8.4" height="2" fill="#a9a9a3"/><rect x="994.2" y="152" width="1.2" height="2" fill="#a9a9a3"/><rect x="989.4" y="155" width="8.4" height="2" fill="#a9a9a3"/><rect x="999.0" y="155" width="12.0" height="2" fill="#9fc7bd"/><rect x="1011.0" y="155" width="1.2" height="2" fill="#a9a9a3"/><rect x="989.4" y="158" width="7.2" height="2" fill="#a9a9a3"/><rect x="997.8" y="158" width="6.0" height="2" fill="#9fc7bd"/><rect x="1005.0" y="158" width="13.2" height="2" fill="#9fc7bd"/><rect x="1019.4" y="158" width="4.8" height="2" fill="#9fc7bd"/><rect x="1025.4" y="158" width="28.6" height="2" fill="#9fc7bd"/><rect x="989.4" y="161" width="8.4" height="2" fill="#a9a9a3"/><rect x="999.0" y="161" width="28.8" height="2" fill="#9fc7bd"/><rect x="1027.8" y="161" width="1.2" height="2" fill="#a9a9a3"/><rect x="989.4" y="164" width="7.2" height="2" fill="#a9a9a3"/><rect x="997.8" y="164" width="6.0" height="2" fill="#9fc7bd"/><rect x="1005.0" y="164" width="12.0" height="2" fill="#9fc7bd"/><rect x="1018.2" y="164" width="35.8" height="2" fill="#9fc7bd"/><rect x="984.6" y="167" width="2.4" height="2" fill="#a9a9a3"/><rect x="984.6" y="170" width="16.8" height="2" fill="#a9a9a3"/><rect x="1002.6" y="170" width="1.2" height="2" fill="#a9a9a3"/><rect x="989.4" y="173" width="14.4" height="2" fill="#9fc7bd"/><rect x="1003.8" y="173" width="1.2" height="2" fill="#a9a9a3"/><rect x="1006.2" y="173" width="14.4" height="2" fill="#9fc7bd"/><rect x="1020.6" y="173" width="1.2" height="2" fill="#a9a9a3"/><rect x="1023.0" y="173" width="14.4" height="2" fill="#9fc7bd"/><rect x="984.6" y="176" width="2.4" height="2" fill="#a9a9a3"/><rect x="984.6" y="179" width="9.6" height="2" fill="#a9a9a3"/><rect x="995.4" y="179" width="1.2" height="2" fill="#a9a9a3"/><rect x="989.4" y="182" width="1.2" height="2" fill="#9fc7bd"/><rect x="991.8" y="182" width="62.2" height="2" fill="#9fc7bd"/><rect x="989.4" y="185" width="1.2" height="2" fill="#9fc7bd"/><rect x="991.8" y="185" width="4.8" height="2" fill="#9fc7bd"/><rect x="997.8" y="185" width="4.8" height="2" fill="#9fc7bd"/><rect x="1003.8" y="185" width="12.0" height="2" fill="#9fc7bd"/><rect x="1017.0" y="185" width="37.0" height="2" fill="#9fc7bd"/><rect x="989.4" y="188" width="1.2" height="2" fill="#9fc7bd"/><rect x="991.8" y="188" width="62.2" height="2" fill="#9fc7bd"/><rect x="984.6" y="191" width="2.4" height="2" fill="#a9a9a3"/><rect x="984.6" y="194" width="10.8" height="2" fill="#a9a9a3"/><rect x="996.6" y="194" width="12.0" height="2" fill="#9fc7bd"/><rect x="1008.6" y="194" width="1.2" height="2" fill="#a9a9a3"/><rect x="984.6" y="197" width="10.8" height="2" fill="#a9a9a3"/><rect x="996.6" y="197" width="1.2" height="2" fill="#a9a9a3"/><rect x="989.4" y="200" width="2.4" height="2" fill="#e7a0c0"/><rect x="993.0" y="200" width="1.2" height="2" fill="#a9a9a3"/><rect x="994.2" y="203" width="7.2" height="2" fill="#a9a9a3"/><rect x="1002.6" y="203" width="10.8" height="2" fill="#9fc7bd"/><rect x="994.2" y="206" width="6.0" height="2" fill="#a9a9a3"/><rect x="1001.4" y="206" width="26.4" height="2" fill="#9fc7bd"/><rect x="989.4" y="209" width="2.4" height="2" fill="#a9a9a3"/><rect x="989.4" y="212" width="2.4" height="2" fill="#e7a0c0"/><rect x="993.0" y="212" width="1.2" height="2" fill="#a9a9a3"/><rect x="994.2" y="215" width="7.2" height="2" fill="#a9a9a3"/><rect x="1002.6" y="215" width="10.8" height="2" fill="#9fc7bd"/><rect x="994.2" y="218" width="6.0" height="2" fill="#a9a9a3"/><rect x="1001.4" y="218" width="8.4" height="2" fill="#9fc7bd"/><rect x="1011.0" y="218" width="3.6" height="2" fill="#9fc7bd"/><rect x="1015.8" y="218" width="15.6" height="2" fill="#9fc7bd"/><rect x="989.4" y="221" width="2.4" height="2" fill="#a9a9a3"/><rect x="989.4" y="224" width="2.4" height="2" fill="#e7a0c0"/><rect x="993.0" y="224" width="1.2" height="2" fill="#a9a9a3"/><rect x="994.2" y="227" width="7.2" height="2" fill="#a9a9a3"/><rect x="1002.6" y="227" width="10.8" height="2" fill="#9fc7bd"/><rect x="994.2" y="230" width="6.0" height="2" fill="#a9a9a3"/><rect x="1001.4" y="230" width="30.0" height="2" fill="#9fc7bd"/><rect x="989.4" y="233" width="2.4" height="2" fill="#a9a9a3"/><rect x="989.4" y="236" width="2.4" height="2" fill="#e7a0c0"/><rect x="993.0" y="236" width="1.2" height="2" fill="#a9a9a3"/><rect x="994.2" y="239" width="7.2" height="2" fill="#a9a9a3"/><rect x="1002.6" y="239" width="10.8" height="2" fill="#9fc7bd"/><rect x="994.2" y="242" width="6.0" height="2" fill="#a9a9a3"/><rect x="1001.4" y="242" width="36.0" height="2" fill="#9fc7bd"/><rect x="989.4" y="245" width="2.4" height="2" fill="#a9a9a3"/><rect x="989.4" y="248" width="2.4" height="2" fill="#e7a0c0"/><rect x="993.0" y="248" width="1.2" height="2" fill="#a9a9a3"/><rect x="994.2" y="251" width="7.2" height="2" fill="#a9a9a3"/><rect x="1002.6" y="251" width="10.8" height="2" fill="#9fc7bd"/><rect x="994.2" y="254" width="6.0" height="2" fill="#a9a9a3"/><rect x="1001.4" y="254" width="31.2" height="2" fill="#9fc7bd"/><rect x="989.4" y="257" width="2.4" height="2" fill="#a9a9a3"/><rect x="989.4" y="260" width="2.4" height="2" fill="#e7a0c0"/><rect x="993.0" y="260" width="1.2" height="2" fill="#a9a9a3"/><rect x="994.2" y="263" width="7.2" height="2" fill="#a9a9a3"/><rect x="1002.6" y="263" width="10.8" height="2" fill="#9fc7bd"/><rect x="994.2" y="266" width="6.0" height="2" fill="#a9a9a3"/><rect x="1001.4" y="266" width="26.4" height="2" fill="#9fc7bd"/><rect x="1029.0" y="266" width="14.4" height="2" fill="#9fc7bd"/><rect x="989.4" y="269" width="1.2" height="2" fill="#a9a9a3"/><rect x="984.6" y="272" width="2.4" height="2" fill="#a9a9a3"/><rect x="984.6" y="275" width="7.2" height="2" fill="#a9a9a3"/><rect x="993.0" y="275" width="1.2" height="2" fill="#a9a9a3"/><rect x="989.4" y="278" width="12.0" height="2" fill="#a9a9a3"/><rect x="1001.4" y="278" width="7.2" height="2" fill="#9fc7bd"/><rect x="989.4" y="281" width="6.0" height="2" fill="#a9a9a3"/><rect x="995.4" y="281" width="6.0" height="2" fill="#9fc7bd"/><rect x="989.4" y="284" width="7.2" height="2" fill="#a9a9a3"/><rect x="996.6" y="284" width="10.8" height="2" fill="#9fc7bd"/><rect x="989.4" y="287" width="15.6" height="2" fill="#a9a9a3"/><rect x="1005.0" y="287" width="42.0" height="2" fill="#9fc7bd"/><rect x="989.4" y="290" width="9.6" height="2" fill="#a9a9a3"/><rect x="999.0" y="290" width="6.0" height="2" fill="#9fc7bd"/><rect x="989.4" y="293" width="6.0" height="2" fill="#a9a9a3"/><rect x="995.4" y="293" width="6.0" height="2" fill="#9fc7bd"/><rect x="989.4" y="296" width="6.0" height="2" fill="#a9a9a3"/><rect x="996.6" y="296" width="16.8" height="2" fill="#9fc7bd"/><rect x="1014.6" y="296" width="4.8" height="2" fill="#9fc7bd"/><rect x="1020.6" y="296" width="8.4" height="2" fill="#9fc7bd"/><rect x="989.4" y="299" width="13.2" height="2" fill="#a9a9a3"/><rect x="1002.6" y="299" width="7.2" height="2" fill="#9fc7bd"/><rect x="989.4" y="302" width="10.8" height="2" fill="#a9a9a3"/><rect x="1000.2" y="302" width="48.0" height="2" fill="#9fc7bd"/><rect x="989.4" y="305" width="12.0" height="2" fill="#a9a9a3"/><rect x="1001.4" y="305" width="6.0" height="2" fill="#9fc7bd"/><rect x="989.4" y="308" width="7.2" height="2" fill="#a9a9a3"/><rect x="996.6" y="308" width="4.8" height="2" fill="#9fc7bd"/><rect x="989.4" y="311" width="14.4" height="2" fill="#a9a9a3"/><rect x="1003.8" y="311" width="12.0" height="2" fill="#9fc7bd"/><rect x="989.4" y="314" width="14.4" height="2" fill="#a9a9a3"/><rect x="1003.8" y="314" width="13.2" height="2" fill="#9fc7bd"/><rect x="989.4" y="317" width="9.6" height="2" fill="#a9a9a3"/><rect x="999.0" y="317" width="7.2" height="2" fill="#9fc7bd"/><rect x="989.4" y="320" width="9.6" height="2" fill="#a9a9a3"/><rect x="999.0" y="320" width="6.0" height="2" fill="#9fc7bd"/><rect x="989.4" y="323" width="15.6" height="2" fill="#a9a9a3"/><rect x="1005.0" y="323" width="13.2" height="2" fill="#9fc7bd"/><rect x="989.4" y="326" width="14.4" height="2" fill="#a9a9a3"/><rect x="1003.8" y="326" width="9.6" height="2" fill="#9fc7bd"/><rect x="989.4" y="329" width="7.2" height="2" fill="#a9a9a3"/><rect x="996.6" y="329" width="6.0" height="2" fill="#9fc7bd"/><rect x="989.4" y="332" width="8.4" height="2" fill="#a9a9a3"/><rect x="997.8" y="332" width="10.8" height="2" fill="#9fc7bd"/><rect x="989.4" y="335" width="14.4" height="2" fill="#a9a9a3"/><rect x="1005.0" y="335" width="25.2" height="2" fill="#9fc7bd"/><rect x="1031.4" y="335" width="8.4" height="2" fill="#9fc7bd"/><rect x="1041.0" y="335" width="13.0" height="2" fill="#9fc7bd"/><rect x="989.4" y="338" width="12.0" height="2" fill="#a9a9a3"/><rect x="1001.4" y="338" width="10.8" height="2" fill="#9fc7bd"/><rect x="989.4" y="341" width="14.4" height="2" fill="#a9a9a3"/><rect x="1003.8" y="341" width="28.8" height="2" fill="#9fc7bd"/><rect x="989.4" y="344" width="14.4" height="2" fill="#a9a9a3"/><rect x="1005.0" y="344" width="26.4" height="2" fill="#9fc7bd"/><rect x="1032.6" y="344" width="8.4" height="2" fill="#9fc7bd"/><rect x="1042.2" y="344" width="11.8" height="2" fill="#9fc7bd"/><rect x="989.4" y="347" width="10.8" height="2" fill="#a9a9a3"/><rect x="1000.2" y="347" width="12.0" height="2" fill="#9fc7bd"/><rect x="989.4" y="350" width="12.0" height="2" fill="#a9a9a3"/><rect x="1001.4" y="350" width="4.8" height="2" fill="#9fc7bd"/><rect x="989.4" y="353" width="12.0" height="2" fill="#a9a9a3"/><rect x="1001.4" y="353" width="7.2" height="2" fill="#9fc7bd"/><rect x="989.4" y="356" width="14.4" height="2" fill="#a9a9a3"/><rect x="1003.8" y="356" width="4.8" height="2" fill="#9fc7bd"/><rect x="989.4" y="359" width="9.6" height="2" fill="#a9a9a3"/><rect x="994.2" y="362" width="1.2" height="2" fill="#e7a0c0"/><rect x="995.4" y="362" width="36.0" height="2" fill="#9fc7bd"/><rect x="994.2" y="365" width="1.2" height="2" fill="#e7a0c0"/><rect x="995.4" y="365" width="43.2" height="2" fill="#9fc7bd"/><rect x="994.2" y="368" width="1.2" height="2" fill="#e7a0c0"/><rect x="995.4" y="368" width="52.8" height="2" fill="#9fc7bd"/><rect x="1049.4" y="368" width="4.6" height="2" fill="#9fc7bd"/><rect x="989.4" y="371" width="2.4" height="2" fill="#a9a9a3"/><rect x="989.4" y="374" width="10.8" height="2" fill="#a9a9a3"/><rect x="1000.2" y="374" width="7.2" height="2" fill="#9fc7bd"/><rect x="989.4" y="377" width="13.2" height="2" fill="#a9a9a3"/><rect x="1002.6" y="377" width="12.0" height="2" fill="#9fc7bd"/><rect x="989.4" y="380" width="14.4" height="2" fill="#a9a9a3"/><rect x="1003.8" y="380" width="6.0" height="2" fill="#9fc7bd"/><rect x="989.4" y="383" width="13.2" height="2" fill="#a9a9a3"/><rect x="1002.6" y="383" width="9.6" height="2" fill="#9fc7bd"/><rect x="989.4" y="386" width="13.2" height="2" fill="#a9a9a3"/><rect x="1002.6" y="386" width="9.6" height="2" fill="#9fc7bd"/><rect x="989.4" y="389" width="12.0" height="2" fill="#a9a9a3"/><rect x="1001.4" y="389" width="12.0" height="2" fill="#9fc7bd"/><rect x="989.4" y="392" width="15.6" height="2" fill="#a9a9a3"/><rect x="994.2" y="395" width="7.2" height="2" fill="#a9a9a3"/><rect x="1005.0" y="395" width="6.0" height="2" fill="#9fc7bd"/><rect x="994.2" y="398" width="7.2" height="2" fill="#a9a9a3"/><rect x="1005.0" y="398" width="7.2" height="2" fill="#9fc7bd"/><rect x="994.2" y="401" width="7.2" height="2" fill="#a9a9a3"/><rect x="1005.0" y="401" width="12.0" height="2" fill="#9fc7bd"/><rect x="994.2" y="404" width="7.2" height="2" fill="#a9a9a3"/><rect x="1005.0" y="404" width="6.0" height="2" fill="#9fc7bd"/><rect x="989.4" y="407" width="2.4" height="2" fill="#a9a9a3"/><rect x="989.4" y="410" width="14.4" height="2" fill="#a9a9a3"/><rect x="1003.8" y="410" width="7.2" height="2" fill="#9fc7bd"/><rect x="989.4" y="413" width="6.0" height="2" fill="#a9a9a3"/><rect x="995.4" y="413" width="7.2" height="2" fill="#9fc7bd"/><rect x="989.4" y="416" width="12.0" height="2" fill="#a9a9a3"/><rect x="1001.4" y="416" width="10.8" height="2" fill="#9fc7bd"/><rect x="989.4" y="419" width="15.6" height="2" fill="#a9a9a3"/><rect x="1005.0" y="419" width="4.8" height="2" fill="#9fc7bd"/><rect x="989.4" y="422" width="15.6" height="2" fill="#a9a9a3"/><rect x="1005.0" y="422" width="12.0" height="2" fill="#9fc7bd"/><rect x="989.4" y="425" width="13.2" height="2" fill="#a9a9a3"/><rect x="1002.6" y="425" width="6.0" height="2" fill="#9fc7bd"/><rect x="989.4" y="428" width="13.2" height="2" fill="#a9a9a3"/><rect x="1002.6" y="428" width="33.6" height="2" fill="#9fc7bd"/><rect x="989.4" y="431" width="7.2" height="2" fill="#a9a9a3"/><rect x="996.6" y="431" width="10.8" height="2" fill="#9fc7bd"/><rect x="989.4" y="434" width="7.2" height="2" fill="#a9a9a3"/><rect x="996.6" y="434" width="4.8" height="2" fill="#9fc7bd"/><rect x="989.4" y="437" width="15.6" height="2" fill="#a9a9a3"/><rect x="1005.0" y="437" width="6.0" height="2" fill="#9fc7bd"/><rect x="989.4" y="440" width="6.0" height="2" fill="#a9a9a3"/><rect x="995.4" y="440" width="6.0" height="2" fill="#9fc7bd"/><rect x="989.4" y="443" width="13.2" height="2" fill="#a9a9a3"/><rect x="1002.6" y="443" width="7.2" height="2" fill="#9fc7bd"/><rect x="989.4" y="446" width="12.0" height="2" fill="#a9a9a3"/><rect x="1001.4" y="446" width="10.8" height="2" fill="#9fc7bd"/><rect x="989.4" y="449" width="7.2" height="2" fill="#a9a9a3"/><rect x="996.6" y="449" width="13.2" height="2" fill="#9fc7bd"/><rect x="989.4" y="452" width="14.4" height="2" fill="#a9a9a3"/><rect x="1003.8" y="452" width="13.2" height="2" fill="#9fc7bd"/><rect x="989.4" y="455" width="7.2" height="2" fill="#a9a9a3"/><rect x="996.6" y="455" width="38.4" height="2" fill="#9fc7bd"/><rect x="989.4" y="458" width="14.4" height="2" fill="#a9a9a3"/><rect x="1003.8" y="458" width="7.2" height="2" fill="#9fc7bd"/><rect x="989.4" y="461" width="9.6" height="2" fill="#a9a9a3"/><rect x="999.0" y="461" width="46.8" height="2" fill="#9fc7bd"/><rect x="989.4" y="464" width="15.6" height="2" fill="#a9a9a3"/><rect x="1005.0" y="464" width="9.6" height="2" fill="#9fc7bd"/><rect x="989.4" y="467" width="7.2" height="2" fill="#a9a9a3"/><rect x="996.6" y="467" width="9.6" height="2" fill="#9fc7bd"/><rect x="989.4" y="470" width="8.4" height="2" fill="#a9a9a3"/><rect x="997.8" y="470" width="10.8" height="2" fill="#9fc7bd"/><rect x="989.4" y="473" width="15.6" height="2" fill="#a9a9a3"/><rect x="1005.0" y="473" width="10.8" height="2" fill="#9fc7bd"/><rect x="989.4" y="476" width="9.6" height="2" fill="#a9a9a3"/><rect x="999.0" y="476" width="8.4" height="2" fill="#9fc7bd"/><rect x="989.4" y="479" width="9.6" height="2" fill="#a9a9a3"/><rect x="999.0" y="479" width="8.4" height="2" fill="#9fc7bd"/><rect x="989.4" y="482" width="12.0" height="2" fill="#a9a9a3"/><rect x="1001.4" y="482" width="4.8" height="2" fill="#9fc7bd"/><rect x="989.4" y="485" width="10.8" height="2" fill="#a9a9a3"/><rect x="1000.2" y="485" width="13.2" height="2" fill="#9fc7bd"/><rect x="989.4" y="488" width="12.0" height="2" fill="#a9a9a3"/><rect x="1001.4" y="488" width="13.2" height="2" fill="#9fc7bd"/><rect x="989.4" y="491" width="12.0" height="2" fill="#a9a9a3"/><rect x="1002.6" y="491" width="14.4" height="2" fill="#9fc7bd"/><rect x="1018.2" y="491" width="4.8" height="2" fill="#9fc7bd"/><rect x="1024.2" y="491" width="9.6" height="2" fill="#9fc7bd"/><rect x="989.4" y="494" width="9.6" height="2" fill="#a9a9a3"/><rect x="999.0" y="494" width="13.2" height="2" fill="#9fc7bd"/><rect x="989.4" y="497" width="6.0" height="2" fill="#a9a9a3"/><rect x="995.4" y="497" width="13.2" height="2" fill="#9fc7bd"/><rect x="989.4" y="500" width="12.0" height="2" fill="#a9a9a3"/><rect x="1001.4" y="500" width="6.0" height="2" fill="#9fc7bd"/><rect x="989.4" y="503" width="7.2" height="2" fill="#a9a9a3"/><rect x="996.6" y="503" width="12.0" height="2" fill="#9fc7bd"/><rect x="989.4" y="506" width="9.6" height="2" fill="#a9a9a3"/><rect x="999.0" y="506" width="13.2" height="2" fill="#9fc7bd"/><rect x="989.4" y="509" width="13.2" height="2" fill="#a9a9a3"/><rect x="1003.8" y="509" width="26.4" height="2" fill="#9fc7bd"/><rect x="1031.4" y="509" width="7.2" height="2" fill="#9fc7bd"/><rect x="1039.8" y="509" width="4.8" height="2" fill="#9fc7bd"/><rect x="989.4" y="512" width="8.4" height="2" fill="#a9a9a3"/><rect x="997.8" y="512" width="7.2" height="2" fill="#9fc7bd"/><rect x="989.4" y="515" width="6.0" height="2" fill="#a9a9a3"/><rect x="995.4" y="515" width="7.2" height="2" fill="#9fc7bd"/><rect x="989.4" y="518" width="14.4" height="2" fill="#a9a9a3"/><rect x="1003.8" y="518" width="7.2" height="2" fill="#9fc7bd"/><rect x="989.4" y="521" width="14.4" height="2" fill="#a9a9a3"/><rect x="1005.0" y="521" width="22.8" height="2" fill="#9fc7bd"/><rect x="1029.0" y="521" width="3.6" height="2" fill="#9fc7bd"/><rect x="1033.8" y="521" width="4.8" height="2" fill="#9fc7bd"/><rect x="984.6" y="524" width="1.2" height="2" fill="#a9a9a3"/><rect x="984.6" y="527" width="8.4" height="2" fill="#a9a9a3"/><rect x="994.2" y="527" width="1.2" height="2" fill="#a9a9a3"/><rect x="989.4" y="530" width="15.6" height="2" fill="#a9a9a3"/><rect x="1005.0" y="530" width="7.2" height="2" fill="#9fc7bd"/><rect x="989.4" y="533" width="9.6" height="2" fill="#a9a9a3"/><rect x="1000.2" y="533" width="16.8" height="2" fill="#9fc7bd"/><rect x="1018.2" y="533" width="4.8" height="2" fill="#9fc7bd"/><rect x="1024.2" y="533" width="14.4" height="2" fill="#9fc7bd"/><rect x="989.4" y="536" width="12.0" height="2" fill="#a9a9a3"/><rect x="1001.4" y="536" width="9.6" height="2" fill="#9fc7bd"/><rect x="989.4" y="539" width="8.4" height="2" fill="#a9a9a3"/><rect x="997.8" y="539" width="4.8" height="2" fill="#9fc7bd"/><rect x="989.4" y="542" width="12.0" height="2" fill="#a9a9a3"/><rect x="1001.4" y="542" width="13.2" height="2" fill="#9fc7bd"/><rect x="984.6" y="545" width="1.2" height="2" fill="#a9a9a3"/><rect x="984.6" y="548" width="9.6" height="2" fill="#a9a9a3"/><rect x="995.4" y="548" width="1.2" height="2" fill="#a9a9a3"/><rect x="989.4" y="551" width="7.2" height="2" fill="#a9a9a3"/><rect x="997.8" y="551" width="7.2" height="2" fill="#9fc7bd"/><rect x="989.4" y="554" width="6.0" height="2" fill="#a9a9a3"/><rect x="996.6" y="554" width="8.4" height="2" fill="#9fc7bd"/><rect x="1006.2" y="554" width="7.2" height="2" fill="#9fc7bd"/><rect x="1015.8" y="554" width="19.2" height="2" fill="#9fc7bd"/><rect x="1037.4" y="554" width="7.2" height="2" fill="#9fc7bd"/><rect x="1045.8" y="554" width="3.6" height="2" fill="#9fc7bd"/><rect x="1050.6" y="554" width="3.4" height="2" fill="#9fc7bd"/><rect x="979.8" y="560" width="1.2" height="2" fill="#a9a9a3"/><rect x="979.8" y="563" width="7.2" height="2" fill="#a9a9a3"/><rect x="988.2" y="563" width="1.2" height="2" fill="#a9a9a3"/><rect x="984.6" y="566" width="15.6" height="2" fill="#a9a9a3"/><rect x="1000.2" y="566" width="12.0" height="2" fill="#9fc7bd"/><rect x="984.6" y="569" width="15.6" height="2" fill="#a9a9a3"/><rect x="1000.2" y="569" width="7.2" height="2" fill="#9fc7bd"/><rect x="984.6" y="572" width="15.6" height="2" fill="#a9a9a3"/><rect x="1000.2" y="572" width="4.8" height="2" fill="#9fc7bd"/><rect x="984.6" y="575" width="8.4" height="2" fill="#a9a9a3"/><rect x="993.0" y="575" width="4.8" height="2" fill="#9fc7bd"/><rect x="984.6" y="578" width="8.4" height="2" fill="#a9a9a3"/><rect x="993.0" y="578" width="49.2" height="2" fill="#9fc7bd"/><rect x="984.6" y="581" width="15.6" height="2" fill="#a9a9a3"/><rect x="1000.2" y="581" width="4.8" height="2" fill="#9fc7bd"/><rect x="984.6" y="584" width="15.6" height="2" fill="#a9a9a3"/><rect x="1000.2" y="584" width="13.2" height="2" fill="#9fc7bd"/><rect x="984.6" y="587" width="7.2" height="2" fill="#a9a9a3"/><rect x="991.8" y="587" width="4.8" height="2" fill="#9fc7bd"/><rect x="984.6" y="590" width="10.8" height="2" fill="#a9a9a3"/><rect x="995.4" y="590" width="4.8" height="2" fill="#9fc7bd"/><rect x="984.6" y="593" width="15.6" height="2" fill="#a9a9a3"/><rect x="1000.2" y="593" width="13.2" height="2" fill="#9fc7bd"/><rect x="984.6" y="596" width="7.2" height="2" fill="#a9a9a3"/><rect x="991.8" y="596" width="13.2" height="2" fill="#9fc7bd"/><rect x="984.6" y="599" width="15.6" height="2" fill="#a9a9a3"/><rect x="1000.2" y="599" width="8.4" height="2" fill="#9fc7bd"/><rect x="984.6" y="602" width="14.4" height="2" fill="#a9a9a3"/><rect x="999.0" y="602" width="13.2" height="2" fill="#9fc7bd"/><rect x="984.6" y="605" width="9.6" height="2" fill="#a9a9a3"/><rect x="994.2" y="605" width="9.6" height="2" fill="#9fc7bd"/><rect x="984.6" y="608" width="9.6" height="2" fill="#a9a9a3"/><rect x="995.4" y="608" width="14.4" height="2" fill="#9fc7bd"/><rect x="1011.0" y="608" width="6.0" height="2" fill="#9fc7bd"/><rect x="1018.2" y="608" width="4.8" height="2" fill="#9fc7bd"/><rect x="984.6" y="611" width="9.6" height="2" fill="#a9a9a3"/><rect x="995.4" y="611" width="25.2" height="2" fill="#9fc7bd"/><rect x="1021.8" y="611" width="3.6" height="2" fill="#9fc7bd"/><rect x="1026.6" y="611" width="6.0" height="2" fill="#9fc7bd"/><rect x="984.6" y="614" width="12.0" height="2" fill="#a9a9a3"/><rect x="996.6" y="614" width="7.2" height="2" fill="#9fc7bd"/><rect x="984.6" y="617" width="8.4" height="2" fill="#a9a9a3"/><rect x="993.0" y="617" width="13.2" height="2" fill="#9fc7bd"/><rect x="979.8" y="620" width="1.2" height="2" fill="#a9a9a3"/><rect x="979.8" y="623" width="10.8" height="2" fill="#a9a9a3"/><rect x="984.6" y="626" width="7.2" height="2" fill="#a9a9a3"/><rect x="991.8" y="626" width="12.0" height="2" fill="#9fc7bd"/><rect x="984.6" y="629" width="8.4" height="2" fill="#a9a9a3"/><rect x="993.0" y="629" width="8.4" height="2" fill="#9fc7bd"/><rect x="984.6" y="632" width="13.2" height="2" fill="#a9a9a3"/><rect x="997.8" y="632" width="12.0" height="2" fill="#9fc7bd"/><rect x="984.6" y="635" width="9.6" height="2" fill="#a9a9a3"/><rect x="994.2" y="635" width="10.8" height="2" fill="#9fc7bd"/><rect x="984.6" y="638" width="12.0" height="2" fill="#a9a9a3"/><rect x="996.6" y="638" width="4.8" height="2" fill="#9fc7bd"/><rect x="984.6" y="641" width="14.4" height="2" fill="#a9a9a3"/><rect x="999.0" y="641" width="13.2" height="2" fill="#9fc7bd"/><rect x="984.6" y="644" width="13.2" height="2" fill="#a9a9a3"/><rect x="997.8" y="644" width="10.8" height="2" fill="#9fc7bd"/><rect x="984.6" y="647" width="10.8" height="2" fill="#a9a9a3"/><rect x="995.4" y="647" width="6.0" height="2" fill="#9fc7bd"/><rect x="984.6" y="653" width="9.6" height="2" fill="#a9a9a3"/><rect x="995.4" y="653" width="18.0" height="2" fill="#9fc7bd"/><rect x="1014.6" y="653" width="4.8" height="2" fill="#9fc7bd"/><rect x="1020.6" y="653" width="8.4" height="2" fill="#9fc7bd"/><rect x="984.6" y="656" width="8.4" height="2" fill="#a9a9a3"/><rect x="993.0" y="656" width="12.0" height="2" fill="#9fc7bd"/><rect x="984.6" y="659" width="10.8" height="2" fill="#a9a9a3"/><rect x="995.4" y="659" width="12.0" height="2" fill="#9fc7bd"/><rect x="984.6" y="662" width="15.6" height="2" fill="#a9a9a3"/><rect x="1000.2" y="662" width="13.2" height="2" fill="#9fc7bd"/><rect x="984.6" y="665" width="7.2" height="2" fill="#a9a9a3"/><rect x="993.0" y="665" width="26.4" height="2" fill="#9fc7bd"/><rect x="1020.6" y="665" width="3.6" height="2" fill="#9fc7bd"/><rect x="1025.4" y="665" width="8.4" height="2" fill="#9fc7bd"/><rect x="984.6" y="668" width="6.0" height="2" fill="#a9a9a3"/><rect x="990.6" y="668" width="6.0" height="2" fill="#9fc7bd"/><rect x="984.6" y="671" width="7.2" height="2" fill="#a9a9a3"/><rect x="993.0" y="671" width="28.8" height="2" fill="#9fc7bd"/><rect x="1023.0" y="671" width="3.6" height="2" fill="#9fc7bd"/><rect x="1027.8" y="671" width="9.6" height="2" fill="#9fc7bd"/><rect x="984.6" y="674" width="15.6" height="2" fill="#a9a9a3"/><rect x="1000.2" y="674" width="12.0" height="2" fill="#9fc7bd"/><rect x="984.6" y="677" width="10.8" height="2" fill="#a9a9a3"/><rect x="996.6" y="677" width="26.4" height="2" fill="#9fc7bd"/><rect x="1024.2" y="677" width="3.6" height="2" fill="#9fc7bd"/><rect x="1029.0" y="677" width="6.0" height="2" fill="#9fc7bd"/><rect x="984.6" y="680" width="10.8" height="2" fill="#a9a9a3"/><rect x="995.4" y="680" width="4.8" height="2" fill="#9fc7bd"/><rect x="984.6" y="683" width="10.8" height="2" fill="#a9a9a3"/><rect x="995.4" y="683" width="9.6" height="2" fill="#9fc7bd"/><rect x="984.6" y="686" width="9.6" height="2" fill="#a9a9a3"/><rect x="994.2" y="686" width="9.6" height="2" fill="#9fc7bd"/><rect x="984.6" y="689" width="8.4" height="2" fill="#a9a9a3"/><rect x="993.0" y="689" width="9.6" height="2" fill="#9fc7bd"/><rect x="984.6" y="692" width="6.0" height="2" fill="#a9a9a3"/><rect x="990.6" y="692" width="26.4" height="2" fill="#9fc7bd"/><rect x="984.6" y="695" width="15.6" height="2" fill="#a9a9a3"/><rect x="1000.2" y="695" width="8.4" height="2" fill="#9fc7bd"/><rect x="984.6" y="698" width="9.6" height="2" fill="#a9a9a3"/><rect x="994.2" y="698" width="13.2" height="2" fill="#9fc7bd"/><rect x="984.6" y="701" width="13.2" height="2" fill="#a9a9a3"/><rect x="997.8" y="701" width="13.2" height="2" fill="#9fc7bd"/><rect x="984.6" y="704" width="13.2" height="2" fill="#a9a9a3"/><rect x="997.8" y="704" width="9.6" height="2" fill="#9fc7bd"/><rect x="979.8" y="707" width="1.2" height="2" fill="#a9a9a3"/><rect x="979.8" y="710" width="9.6" height="2" fill="#a9a9a3"/><rect x="990.6" y="710" width="1.2" height="2" fill="#a9a9a3"/><rect x="984.6" y="713" width="9.6" height="2" fill="#a9a9a3"/><rect x="994.2" y="713" width="10.8" height="2" fill="#9fc7bd"/><rect x="984.6" y="716" width="8.4" height="2" fill="#a9a9a3"/><rect x="993.0" y="716" width="12.0" height="2" fill="#9fc7bd"/><rect x="984.6" y="719" width="6.0" height="2" fill="#a9a9a3"/><rect x="990.6" y="719" width="50.4" height="2" fill="#9fc7bd"/><rect x="984.6" y="722" width="10.8" height="2" fill="#a9a9a3"/><rect x="995.4" y="722" width="12.0" height="2" fill="#9fc7bd"/><rect x="984.6" y="725" width="7.2" height="2" fill="#a9a9a3"/><rect x="991.8" y="725" width="12.0" height="2" fill="#9fc7bd"/><rect x="984.6" y="728" width="10.8" height="2" fill="#a9a9a3"/><rect x="995.4" y="728" width="8.4" height="2" fill="#9fc7bd"/><rect x="984.6" y="731" width="6.0" height="2" fill="#a9a9a3"/><rect x="990.6" y="731" width="13.2" height="2" fill="#9fc7bd"/><rect x="984.6" y="734" width="10.8" height="2" fill="#a9a9a3"/><rect x="995.4" y="734" width="39.6" height="2" fill="#9fc7bd"/><rect x="984.6" y="737" width="15.6" height="2" fill="#a9a9a3"/><rect x="1000.2" y="737" width="10.8" height="2" fill="#9fc7bd"/><rect x="984.6" y="740" width="10.8" height="2" fill="#a9a9a3"/><rect x="995.4" y="740" width="8.4" height="2" fill="#9fc7bd"/><rect x="984.6" y="743" width="6.0" height="2" fill="#a9a9a3"/><rect x="990.6" y="743" width="10.8" height="2" fill="#9fc7bd"/><rect x="984.6" y="746" width="14.4" height="2" fill="#a9a9a3"/><rect x="999.0" y="746" width="9.6" height="2" fill="#9fc7bd"/><rect x="984.6" y="749" width="9.6" height="2" fill="#a9a9a3"/><rect x="994.2" y="749" width="8.4" height="2" fill="#9fc7bd"/><rect x="984.6" y="752" width="6.0" height="2" fill="#a9a9a3"/><rect x="990.6" y="752" width="6.0" height="2" fill="#9fc7bd"/></svg>
<div class="abs" id="rp"></div><div class="abs" id="rtabs"></div><div class="abs" id="rtab"></div><div class="t" id="rtabt">Web浏览器</div>
<svg style="left:1151px;top:70px" width="10" height="10" viewBox="0 0 10 10"><path d="M0.500 0.500l9 9M9.500 0.500l-9 9" stroke="#444" stroke-width="1.1"/></svg>
<div class="abs" id="rtool"></div><div class="abs" id="url">http://localhost:8080/h5/#/</div><div class="abs" id="dev">iPhone 6/7/8</div>
<svg style="left:1177px;top:138px" width="8" height="5" viewBox="0 0 8 5"><path d="M0.500 0.500h7L4 4.500z" fill="#3ca765"/></svg>
<svg style="left:1201px;top:133px" width="14" height="14" viewBox="0 0 14 14" fill="none" stroke="#3ca765" stroke-width="1.1"><path d="M4 2.500h9.500v11h-11V7"/><path d="M1 1l6.500 6.500M1 5V1h4"/></svg>
<svg style="left:1231px;top:133px" width="14" height="14" viewBox="0 0 14 14" fill="none" stroke="#3ca765" stroke-width="1.1"><path d="M7 0.800l1.500 1.300 2-.3.800 1.800 1.800.900-.400 2 1 1.700-1.400 1.400-.1 2-2 .400L8.500 13.500 7 12.700l-1.700.8-1.600-1.200-2-.3-.2-2L0.500 8.500l.9-1.700-.5-2 1.800-.9.800-1.800 2 .3z"/><circle cx="7" cy="7" r="2.300"/></svg>
<svg style="left:1261px;top:134px" width="15" height="12" viewBox="0 0 15 12" fill="none" stroke="#3ca765" stroke-width="1.1"><rect x="0.500" y="0.500" width="14" height="11"/><path d="M3.500 3.500L6 6 3.500 8.500M7.500 8.500h3.500"/></svg>
<svg style="left:1291px;top:135px" width="15" height="10" viewBox="0 0 15 10" fill="none" stroke="#a8a8a8" stroke-width="1.300"><path d="M14 5H1M5 1L1 5l4 4"/></svg>
<svg style="left:1321px;top:135px" width="15" height="10" viewBox="0 0 15 10" fill="none" stroke="#a8a8a8" stroke-width="1.300"><path d="M1 5h13M10 1l4 4-4 4"/></svg>
<svg style="left:1351px;top:133px" width="14" height="14" viewBox="0 0 14 14" fill="none" stroke="#3ca765" stroke-width="1.200"><path d="M12.500 7A5.500 5.500 0 1 1 10 2.300"/><path d="M8.500 0.800h3.700v3.700"/></svg>
<svg style="left:1382px;top:132px" width="12" height="15" viewBox="0 0 12 15" fill="none" stroke="#3ca765" stroke-width="1.200"><rect x="1" y="6.500" width="10" height="7.500"/><path d="M3 6.500V4a3 3 0 0 1 5.800-1"/></svg>
<svg style="left:1412px;top:133px" width="13" height="13" viewBox="0 0 13 13" fill="none" stroke="#3ca765" stroke-width="1.100"><rect x="0.500" y="0.500" width="4.500" height="4.500"/><rect x="7.500" y="0.500" width="4.500" height="4.500"/><rect x="0.500" y="7.500" width="4.500" height="4.500"/><path d="M7.500 7.500h2M11 7.500h1.500M7.500 10h1.500M11 10h1.500v2.500h-2M7.500 12.500h1"/></svg>
<div class="abs" id="phone"><svg style="left:0;top:0" width="80" height="70" viewBox="0 0 80 70"><defs><linearGradient id="hx" x1="0" y1="0.200" x2="1" y2="0.800"><stop offset="0" stop-color="#e67f2a"/><stop offset="1" stop-color="#f8bf40"/></linearGradient></defs><path d="M41.500 -0.800L73.200 16.800V50.200L41.500 67.800 9.900 50.200V16.800z" fill="url(#hx)"/><path d="M24 18.800h8v5.900h-8zM24 30.200h8v6.100h-8z" fill="#111"/><text x="28.600" y="48.500" font-size="41" font-weight="bold" fill="#111" stroke="#111" stroke-width="1.600" font-family="Liberation Sans,sans-serif" transform="translate(28.600 0) scale(.990 1) translate(-28.600 0)">R</text><path d="M29.400 28h12.500v1.300H29.400z" fill="#ef9a33"/></svg>
<div class="abs" id="iot"><span style="left:94.700px;transform:scaleX(1)">I</span><span style="left:127.500px;transform:scaleX(1.230)">O</span><span style="left:183.300px;transform:scaleX(1.130)">T</span></div><div class="t" id="cm">CLOUDMINING</div>
<div class="abs" id="mbtn"></div>
<svg style="left:339px;top:27px" width="14" height="12" viewBox="0 0 14 12"><path d="M3 0.500h11M2 3.700h12M1 7h13M0 10.500h14" stroke="#fff" stroke-width="1.800"/></svg>
<div class="abs" id="bbar"></div><div class="abs" id="blog">登錄</div><div class="abs" id="breg">註冊</div>
<svg style="left:0;top:136px" width="375" height="299" viewBox="0 0 375 299"><defs><linearGradient id="cyl" gradientUnits="userSpaceOnUse" x1="300" y1="0" x2="270" y2="75"><stop offset="0" stop-color="#454545"/><stop offset="0.350" stop-color="#303030"/><stop offset="1" stop-color="#161616"/></linearGradient><linearGradient id="cend" gradientUnits="userSpaceOnUse" x1="346" y1="50" x2="380" y2="72"><stop offset="0" stop-color="#2c2c2c"/><stop offset="0.450" stop-color="#8c8c90"/><stop offset="1" stop-color="#e4e4e8"/></linearGradient><linearGradient id="belt" x1="0" y1="0" x2="1" y2="0.500"><stop offset="0" stop-color="#363636"/><stop offset="1" stop-color="#4a4a4a"/></linearGradient><linearGradient id="lf" x1="0" y1="0" x2="0" y2="1"><stop offset="0" stop-color="#474747"/><stop offset="0.450" stop-color="#383838"/><stop offset="1" stop-color="#1c1c1c"/></linearGradient><linearGradient id="ff" x1="0" y1="0" x2="0" y2="1"><stop offset="0" stop-color="#242424"/><stop offset="1" stop-color="#151515"/></linearGradient><radialGradient id="coin" cx="0.400" cy="0.350" r="0.750"><stop offset="0" stop-color="#585858"/><stop offset="1" stop-color="#3e3e3e"/></radialGradient><pattern id="haz" width="9" height="9" patternUnits="userSpaceOnUse" patternTransform="rotate(18)"><rect width="9" height="9" fill="#141414"/><rect width="4.300" height="9" fill="#c9b11f"/></pattern><pattern id="tex" width="3" height="3" patternUnits="userSpaceOnUse"><rect width="3" height="3" fill="#353535"/><rect width="1.500" height="1.500" fill="#2c2c2c"/></pattern><clipPath id="bc"><rect width="375" height="299"/></clipPath></defs><g clip-path="url(#bc)"><rect width="375" height="299" fill="url(#tex)"/><polygon points="-4.0,-5.0 132.1,-5.0 31.6,64.7 -4.0,53.3" fill="#242424" /><rect x="3.1" y="0" width="40" height="27.4" fill="#1c1c1c"/><ellipse cx="23.2" cy="27.4" rx="20" ry="7" fill="#1c1c1c"/><ellipse cx="23.2" cy="12.8" rx="20" ry="6" fill="none" stroke="#333" stroke-width="1.500"/><ellipse cx="-0.8" cy="40.4" rx="9" ry="20" fill="#555"/><clipPath id="lb"><polygon points="-0.1,38.7 31.6,61.4 31.6,106.8 18.7,122.0 -0.1,104.5"/></clipPath><g clip-path="url(#lb)"><rect x="0" y="0" width="60" height="160" fill="#474747"/><line x1="-0.1" y1="56.6" x2="31.6" y2="36.5" stroke="#1f1f1f" stroke-width="1.200"/><line x1="-0.1" y1="68.2" x2="31.6" y2="48.1" stroke="#1f1f1f" stroke-width="1.200"/><line x1="-0.1" y1="79.9" x2="31.6" y2="59.8" stroke="#1f1f1f" stroke-width="1.200"/><line x1="-0.1" y1="91.6" x2="31.6" y2="71.5" stroke="#1f1f1f" stroke-width="1.200"/><line x1="-0.1" y1="103.2" x2="31.6" y2="83.1" stroke="#1f1f1f" stroke-width="1.200"/><line x1="-0.1" y1="114.9" x2="31.6" y2="94.8" stroke="#1f1f1f" stroke-width="1.200"/><line x1="-0.1" y1="126.6" x2="31.6" y2="106.5" stroke="#1f1f1f" stroke-width="1.200"/><line x1="-0.1" y1="138.2" x2="31.6" y2="118.1" stroke="#1f1f1f" stroke-width="1.200"/><line x1="-0.1" y1="149.9" x2="31.6" y2="129.8" stroke="#1f1f1f" stroke-width="1.200"/></g><polygon points="-0.1,104.5 18.7,122.0 18.7,139.2 -0.1,126.2" fill="#181818" /><circle cx="5.4" cy="115.9" r="5" fill="#4b4b4b"/><circle cx="5.4" cy="115.9" r="2.300" fill="#222"/><polygon points="227.7,43.6 339.5,101.9 378.0,89.0 378.0,150.5 347.6,157.0 227.7,98.7" fill="#171717" /><polygon points="347.6,110.0 378.0,95.5 378.0,150.5 347.6,157.0" fill="#202020" /><path d="M227.7 0.0 L323.3 0.0 L355.7 8.0 C368.7 14.4 378.0 24.2 378.0 30.6 L339.5 103.6 L227.7 48.5 z" fill="url(#cyl)"/><path d="M299.0 -0.1 Q281.2 30.6 289.3 74.4" stroke="#1a1a1a" stroke-width="2" fill="none"/><rect x="258.6" y="5.1" width="16" height="9" rx="4" fill="#565656" opacity=".550" transform="rotate(22 266.6 9.6)"/><rect x="318.0" y="8.8" width="17" height="8" rx="4" fill="#565656" opacity=".550" transform="rotate(22 326.5 12.8)"/><rect x="247.6" y="31.1" width="12" height="12" rx="4" fill="#565656" opacity=".550" transform="rotate(22 253.6 37.1)"/><rect x="296.8" y="27.9" width="14" height="12" rx="4" fill="#565656" opacity=".550" transform="rotate(22 303.8 33.9)"/><rect x="342.2" y="26.1" width="14" height="9" rx="4" fill="#565656" opacity=".550" transform="rotate(22 349.2 30.6)"/><rect x="286.0" y="51.7" width="13" height="13" rx="4" fill="#565656" opacity=".550" transform="rotate(22 292.5 58.2)"/><rect x="326.5" y="47.3" width="13" height="12" rx="4" fill="#565656" opacity=".550" transform="rotate(22 333.0 53.3)"/><rect x="318.9" y="73.3" width="12" height="12" rx="4" fill="#565656" opacity=".550" transform="rotate(22 324.9 79.3)"/><rect x="231.3" y="2.8" width="9" height="7" rx="4" fill="#565656" opacity=".550" transform="rotate(22 235.8 6.3)"/><ellipse cx="362.2" cy="63.7" rx="22" ry="40" fill="#1c1c1c" transform="rotate(24 362.2 63.7)"/><ellipse cx="366.1" cy="65.6" rx="20" ry="37" fill="url(#cend)" transform="rotate(24 366.1 65.6)"/><rect x="248.1" y="66.3" width="13" height="18" rx="2" fill="#6a6a6a" opacity=".800"/><rect x="275.0" y="103.5" width="22" height="13" rx="4" fill="#0f0f0f" transform="rotate(28 286.0 110.0)"/><rect x="305.8" y="98.7" width="22" height="13" rx="4" fill="#0f0f0f" transform="rotate(28 316.8 105.2)"/><rect x="304.2" y="121.4" width="22" height="13" rx="4" fill="#0f0f0f" transform="rotate(28 315.2 127.9)"/><path d="M229.3 101.9 Q255.2 105.2 277.9 108.4" stroke="#3c3c3c" stroke-width="1" fill="none"/><path d="M284.4 76.0 Q297.4 92.2 311.9 103.6" stroke="#3c3c3c" stroke-width="1" fill="none"/><path d="M333.0 108.4 Q358.9 98.7 373.5 76.0" stroke="#555" stroke-width="1" fill="none"/><polygon points="352.4,142.4 368.7,137.6 378.0,142.4 378.0,152.2 358.9,154.4" fill="#2c2c2c" /><polygon points="128.9,172.6 211.5,146.7 378.0,222.8 378.0,298.0 360.5,288.3" fill="url(#belt)" /><line x1="222.8" y1="151.8" x2="179.8" y2="198.7" stroke="#1c1c1c" stroke-width="1.200"/><line x1="242.3" y1="160.7" x2="198.7" y2="208.1" stroke="#1c1c1c" stroke-width="1.200"/><line x1="261.7" y1="169.6" x2="217.7" y2="217.5" stroke="#1c1c1c" stroke-width="1.200"/><line x1="281.2" y1="178.5" x2="236.6" y2="226.9" stroke="#1c1c1c" stroke-width="1.200"/><line x1="300.6" y1="187.4" x2="255.6" y2="236.3" stroke="#1c1c1c" stroke-width="1.200"/><line x1="320.0" y1="196.3" x2="274.6" y2="245.7" stroke="#1c1c1c" stroke-width="1.200"/><line x1="339.5" y1="205.1" x2="293.5" y2="255.1" stroke="#1c1c1c" stroke-width="1.200"/><line x1="358.9" y1="214.0" x2="312.5" y2="264.5" stroke="#1c1c1c" stroke-width="1.200"/><line x1="378.4" y1="222.9" x2="331.5" y2="273.9" stroke="#1c1c1c" stroke-width="1.200"/><line x1="397.8" y1="231.8" x2="350.4" y2="283.3" stroke="#1c1c1c" stroke-width="1.200"/><line x1="417.3" y1="240.7" x2="369.4" y2="292.7" stroke="#1c1c1c" stroke-width="1.200"/><line x1="436.7" y1="249.6" x2="388.4" y2="302.1" stroke="#1c1c1c" stroke-width="1.200"/><line x1="456.1" y1="258.5" x2="407.3" y2="311.5" stroke="#1c1c1c" stroke-width="1.200"/><polygon points="128.9,172.6 360.5,288.3 378.0,298.0 378.0,315.8 349.2,315.8 128.9,202.4" fill="#141414" /><circle cx="137.0" cy="182.3" r="6.500" fill="#4e4e4e"/><circle cx="137.0" cy="182.3" r="4" fill="#2b2b2b"/><circle cx="137.0" cy="182.3" r="1.800" fill="#777"/><circle cx="203.4" cy="217.0" r="6.500" fill="#4e4e4e"/><circle cx="203.4" cy="217.0" r="4" fill="#2b2b2b"/><circle cx="203.4" cy="217.0" r="1.800" fill="#777"/><circle cx="281.2" cy="254.2" r="6.500" fill="#4e4e4e"/><circle cx="281.2" cy="254.2" r="4" fill="#2b2b2b"/><circle cx="281.2" cy="254.2" r="1.800" fill="#777"/><circle cx="360.5" cy="293.1" r="6.500" fill="#4e4e4e"/><circle cx="360.5" cy="293.1" r="4" fill="#2b2b2b"/><circle cx="360.5" cy="293.1" r="1.800" fill="#777"/><polygon points="102.9,202.4 128.9,202.4 349.2,315.8 102.9,315.8" fill="#1a1a1a" /><polygon points="31.6,64.7 125.6,-0.1 227.7,14.4 109.4,89.0" fill="#565656" /><polygon points="44.6,58.2 127.2,2.1 213.8,13.8 110.1,81.8" fill="#444" /><polygon points="47.8,53.3 128.9,0.8 211.5,11.9 111.0,76.7" fill="#626262" /><polygon points="31.6,64.7 109.4,89.0 109.4,221.8 31.6,189.4" fill="url(#lf)" /><polygon points="109.4,89.0 227.7,14.4 227.7,153.8 109.4,221.8" fill="url(#ff)" /><polygon points="127.2,122.0 211.5,74.4 211.5,147.3 127.2,186.8" fill="#090909" /><polygon points="127.2,168.4 211.5,137.6 211.5,147.3 127.2,186.8" fill="#2a2a2a" /><polygon points="128.2,118.1 217.0,58.2 218.0,72.8 128.9,133.7" fill="url(#haz)" /><ellipse cx="104.6" cy="50.1" rx="25" ry="15.500" fill="#151515"/><ellipse cx="117.1" cy="51.1" rx="8.500" ry="4.200" fill="#b4b4b4" transform="rotate(50 117.1 51.1)"/><ellipse cx="113.5" cy="55.6" rx="8.500" ry="4.200" fill="#b4b4b4" transform="rotate(101 113.5 55.6)"/><ellipse cx="105.6" cy="56.8" rx="8.500" ry="4.200" fill="#b4b4b4" transform="rotate(152 105.6 56.8)"/><ellipse cx="99.1" cy="53.7" rx="8.500" ry="4.200" fill="#b4b4b4" transform="rotate(203 99.1 53.7)"/><ellipse cx="98.9" cy="48.7" rx="8.500" ry="4.200" fill="#b4b4b4" transform="rotate(254 98.9 48.7)"/><ellipse cx="105.1" cy="45.5" rx="8.500" ry="4.200" fill="#b4b4b4" transform="rotate(305 105.1 45.5)"/><ellipse cx="113.1" cy="46.4" rx="8.500" ry="4.200" fill="#b4b4b4" transform="rotate(356 113.1 46.4)"/><ellipse cx="117.0" cy="50.8" rx="8.500" ry="4.200" fill="#b4b4b4" transform="rotate(407 117.0 50.8)"/><ellipse cx="106.6" cy="51.1" rx="7.500" ry="5.200" fill="#c4c4c4"/><path d="M79.6 50.1 A25 15.500 0 0 1 108.6 34.8 A30 22 0 0 0 79.6 50.1 z" fill="#151515" opacity=".850"/><ellipse cx="155.4" cy="12.8" rx="25" ry="15.500" fill="#151515"/><ellipse cx="167.9" cy="13.8" rx="8.500" ry="4.200" fill="#b4b4b4" transform="rotate(50 167.9 13.8)"/><ellipse cx="164.4" cy="18.3" rx="8.500" ry="4.200" fill="#b4b4b4" transform="rotate(101 164.4 18.3)"/><ellipse cx="156.5" cy="19.5" rx="8.500" ry="4.200" fill="#b4b4b4" transform="rotate(152 156.5 19.5)"/><ellipse cx="150.0" cy="16.5" rx="8.500" ry="4.200" fill="#b4b4b4" transform="rotate(203 150.0 16.5)"/><ellipse cx="149.8" cy="11.5" rx="8.500" ry="4.200" fill="#b4b4b4" transform="rotate(254 149.8 11.5)"/><ellipse cx="156.0" cy="8.2" rx="8.500" ry="4.200" fill="#b4b4b4" transform="rotate(305 156.0 8.2)"/><ellipse cx="164.0" cy="9.1" rx="8.500" ry="4.200" fill="#b4b4b4" transform="rotate(356 164.0 9.1)"/><ellipse cx="167.9" cy="13.5" rx="8.500" ry="4.200" fill="#b4b4b4" transform="rotate(407 167.9 13.5)"/><ellipse cx="157.4" cy="13.8" rx="7.500" ry="5.200" fill="#c4c4c4"/><path d="M130.4 12.8 A25 15.500 0 0 1 159.4 -2.5 A30 22 0 0 0 130.4 12.8 z" fill="#151515" opacity=".850"/><polygon points="41.4,70.2 99.0,97.1 97.1,111.0 39.7,84.1" fill="#5c5c5c" /><text x="0" y="0" font-size="8.500" font-weight="bold" fill="#f2f2f2" font-family="Liberation Sans,sans-serif" transform="translate(44.6 82.8) rotate(25) scale(.640 1)">BITCOIN MINING</text><polygon points="51.7,244.5 101.3,206.3 109.4,202.4 109.4,315.8 51.7,315.8" fill="#1d1d1d" /><polygon points="0.5,219.2 51.7,244.5 51.7,266.9 0.5,246.8" fill="#4a4a4a" /><polygon points="22.2,121.1 39.4,114.2 101.3,139.5 79.9,154.4" fill="#474747" /><polygon points="22.2,121.1 79.9,154.4 51.7,210.2 0.5,163.8" fill="#3d3d3d" /><polygon points="0.5,163.8 51.7,210.2 51.7,244.5 0.5,219.2" fill="#2b2b2b" /><polygon points="51.7,210.2 79.9,154.4 101.3,139.5 101.3,206.3 51.7,244.5" fill="#202020" /><polygon points="21.9,140.5 46.6,151.2 37.5,170.3 13.2,159.3" fill="#5f5f5f" /><polygon points="54.7,148.6 70.9,155.7 56.6,182.0 41.7,174.8" fill="#b2b2b2" /><polygon points="53.7,159.0 61.8,162.5 57.2,173.2 49.5,169.7" fill="#4e4e4e" /><circle cx="10.3" cy="166.7" r="0.900" fill="#8a8a8a"/><circle cx="13.8" cy="168.5" r="0.900" fill="#8a8a8a"/><circle cx="17.4" cy="170.3" r="0.900" fill="#8a8a8a"/><circle cx="21.0" cy="172.1" r="0.900" fill="#8a8a8a"/><circle cx="24.5" cy="173.9" r="0.900" fill="#8a8a8a"/><circle cx="28.1" cy="175.7" r="0.900" fill="#8a8a8a"/><circle cx="31.6" cy="177.4" r="0.900" fill="#8a8a8a"/><circle cx="35.2" cy="179.2" r="0.900" fill="#8a8a8a"/><circle cx="8.6" cy="170.0" r="0.900" fill="#8a8a8a"/><circle cx="12.2" cy="171.8" r="0.900" fill="#8a8a8a"/><circle cx="15.8" cy="173.5" r="0.900" fill="#8a8a8a"/><circle cx="19.3" cy="175.3" r="0.900" fill="#8a8a8a"/><circle cx="22.9" cy="177.1" r="0.900" fill="#8a8a8a"/><circle cx="26.5" cy="178.9" r="0.900" fill="#8a8a8a"/><circle cx="30.0" cy="180.7" r="0.900" fill="#8a8a8a"/><circle cx="33.6" cy="182.5" r="0.900" fill="#8a8a8a"/><circle cx="7.0" cy="173.2" r="0.900" fill="#8a8a8a"/><circle cx="10.6" cy="175.0" r="0.900" fill="#8a8a8a"/><circle cx="14.1" cy="176.8" r="0.900" fill="#8a8a8a"/><circle cx="17.7" cy="178.6" r="0.900" fill="#8a8a8a"/><circle cx="21.3" cy="180.4" r="0.900" fill="#8a8a8a"/><circle cx="24.8" cy="182.1" r="0.900" fill="#8a8a8a"/><circle cx="28.4" cy="183.9" r="0.900" fill="#8a8a8a"/><circle cx="32.0" cy="185.7" r="0.900" fill="#8a8a8a"/><circle cx="5.4" cy="176.5" r="0.900" fill="#8a8a8a"/><circle cx="9.0" cy="178.2" r="0.900" fill="#8a8a8a"/><circle cx="12.5" cy="180.0" r="0.900" fill="#8a8a8a"/><circle cx="16.1" cy="181.8" r="0.900" fill="#8a8a8a"/><circle cx="19.7" cy="183.6" r="0.900" fill="#8a8a8a"/><circle cx="23.2" cy="185.4" r="0.900" fill="#8a8a8a"/><circle cx="26.8" cy="187.2" r="0.900" fill="#8a8a8a"/><circle cx="30.3" cy="188.9" r="0.900" fill="#8a8a8a"/><text font-size="4.500" font-weight="bold" fill="#ddd" font-family="Liberation Sans,sans-serif" transform="translate(29.7 135.0) rotate(25)">BITCOIN</text><ellipse cx="67.9" cy="109.1" rx="7" ry="8" fill="#2a2a2a" stroke="#5a5a5a" stroke-width="1.500"/><path d="M67.9 110.0 q-6 4 -8 19" stroke="#555" stroke-width="5" fill="none" stroke-linecap="round"/><ellipse cx="59.8" cy="133.7" rx="8.500" ry="5" fill="none" stroke="#626262" stroke-width="2"/><ellipse cx="88.4" cy="109.1" rx="7" ry="8" fill="#2a2a2a" stroke="#5a5a5a" stroke-width="1.500"/><path d="M88.4 110.0 q-6 4 -8 19" stroke="#555" stroke-width="5" fill="none" stroke-linecap="round"/><ellipse cx="80.3" cy="133.7" rx="8.500" ry="5" fill="none" stroke="#626262" stroke-width="2"/><polygon points="0.5,246.8 51.7,266.9 51.7,315.8 0.5,315.8" fill="#393939" /><line x1="0.5" y1="260.7" x2="51.7" y2="281.8" stroke="#2a2a2a" stroke-width="1"/><rect x="95.8" y="226.7" width="39" height="45" fill="#232323"/><ellipse cx="115.2" cy="226.7" rx="19.500" ry="8.500" fill="#383838" stroke="#555" stroke-width=".800"/><ellipse cx="115.2" cy="246.1" rx="19.500" ry="8" fill="none" stroke="#4a4a4a" stroke-width="1.200"/><circle cx="115.2" cy="226.0" r="2.300" fill="#111"/><polygon points="135.3,254.2 158.0,249.4 178.1,259.1 152.2,264.9" fill="#c7ae22" /><ellipse cx="175.8" cy="172.9" rx="20" ry="6" fill="#000" opacity=".300"/><circle cx="179.1" cy="136.6" r="23" fill="url(#coin)" stroke="#5c5c5c" stroke-width="1"/><text x="180.1" y="146.1" font-size="27" fill="#efc193" text-anchor="middle" font-family="Liberation Serif,serif">B</text><path d="M176.6 148.1v-21.500M180.6 148.1v-21.500" stroke="#efc193" stroke-width="1.200"/><ellipse cx="255.2" cy="212.8" rx="20" ry="6" fill="#000" opacity=".300"/><circle cx="258.5" cy="176.5" r="23" fill="url(#coin)" stroke="#5c5c5c" stroke-width="1"/><text x="259.5" y="186.0" font-size="27" fill="#efc193" text-anchor="middle" font-family="Liberation Serif,serif">B</text><path d="M256.0 188.0v-21.500M260.0 188.0v-21.500" stroke="#efc193" stroke-width="1.200"/><ellipse cx="334.6" cy="251.6" rx="20" ry="6" fill="#000" opacity=".300"/><circle cx="337.9" cy="215.3" r="23" fill="url(#coin)" stroke="#5c5c5c" stroke-width="1"/><text x="338.9" y="224.8" font-size="27" fill="#efc193" text-anchor="middle" font-family="Liberation Serif,serif">B</text><path d="M335.4 226.8v-21.500M339.4 226.8v-21.500" stroke="#efc193" stroke-width="1.200"/></g></svg>
<div class="abs" id="card"></div>
<svg style="left:166px;top:434px" width="50" height="62" viewBox="0 0 50 62"><path d="M10 5v14M21 7v13M31 5v14" stroke="#555" stroke-width="2.200" fill="none"/><circle cx="10" cy="4.500" r="3.300" fill="#8d8d8d"/><circle cx="21" cy="7" r="3.300" fill="#9a9a9a"/><circle cx="31" cy="4.500" r="3.300" fill="#8d8d8d"/><path d="M3 22l36-2.500a3 3 0 0 1 3 3V55a3 3 0 0 1-3 3L3 56z" fill="#4a4a4a"/><path d="M3 22l36-2.500 1 4L3 27z" fill="#5e5e5e"/><circle cx="28" cy="40" r="9.500" fill="#c98a2b"/><circle cx="28" cy="40" r="6.800" fill="#e0a23a"/><text x="28" y="44" font-size="10" font-weight="bold" fill="#c07f22" text-anchor="middle" font-family="Liberation Sans,sans-serif">B</text><rect x="39" y="36" width="4" height="8" rx="1" fill="#333"/></svg>
<div class="t" id="ctitle">下載加密貨幣錢包</div>
<div class="t" id="cdesc">在您的 PC 或移動設備上獲取它以創建, 發送和接收 USDT.</div>
<svg style="left:150px;top:626px" width="64" height="45" viewBox="0 0 64 45"><path d="M28.500 4L33 6.500 13 41l-4.500-2.500z" fill="#3d3d3d"/><path d="M5.300 9.800C13 3 24 1.200 31.500 5.200 37.500 8.600 41.300 15 42.600 23.300 38.500 16.500 33.500 11.800 28 9.500 21 6.800 12.500 7.200 5.300 9.800z" fill="#6c6c6c"/><circle cx="30.800" cy="39.400" r="13.200" fill="#c98524"/><circle cx="30.800" cy="39.400" r="10" fill="#e9a83c"/><circle cx="30.800" cy="39.400" r="6.500" fill="none" stroke="#c98524" stroke-width="1"/><path d="M42 45l2.500-12 6.500-6.500 6.500 3.500 4 15z" fill="#8d8d8d"/><path d="M44.500 33l6.500-6.500 2 6z" fill="#a9a9a9"/><path d="M46.500 24.500l4.200-6 0.800 6.500z" fill="#f2b33d"/></svg>
</div>
<div class="abs" id="con"></div><div class="t" id="ctab">mi_ning - H5</div><div class="abs" id="ctabu"></div><div class="abs" id="cscr"></div>
<svg style="left:885px;top:785px" width="13" height="14" viewBox="0 0 13 14" fill="none" stroke="#e8877a" stroke-width="1"><path d="M3.500 4.500a3 3.300 0 0 1 6 0v4.500a3 3.500 0 0 1-6 0z"/><path d="M3.500 5h6M6.500 5v7.500M4.500 2.500a2 2 0 0 1 4 0M0.800 3.500l2.700 2M12.200 3.500l-2.700 2M0.300 8h3.200M9.500 8h3.200M0.800 12.500l2.700-2M12.200 12.500l-2.700-2"/></svg>
<svg style="left:915px;top:785px" width="14" height="14" viewBox="0 0 14 14" fill="none" stroke="#9ab5a8" stroke-width="1"><path d="M3 3.200A5.700 5.700 0 1 1 1.400 8.500"/><path d="M0.800 1.300l2.200 2.200 2.300-1"/><path d="M5.700 4.300v5.400l4.300-2.700z" fill="#9ab5a8"/></svg>
<svg style="left:946px;top:786px" width="12" height="12" viewBox="0 0 12 12"><rect x="0.500" y="0.500" width="11" height="11" fill="none" stroke="#d9a39c" stroke-width="1"/><rect x="2.500" y="2.500" width="7" height="7" fill="#cc8982"/></svg>
<svg style="left:975px;top:785px" width="15" height="13" viewBox="0 0 15 13" fill="none" stroke="#8a7a3c" stroke-width="1"><path d="M9 1.500H0.500v10.500h13V6"/><path d="M3.500 5l2.500 2-2.500 2M7.500 9.500h3"/><path d="M12 0v4.500M9.800 2.200h4.400"/></svg>
<svg style="left:1005px;top:788px" width="15" height="9" viewBox="0 0 15 9" fill="none"><path d="M0.700 7.800L7.300 1.200 14 7.800" stroke="#9a8c55" stroke-width="1.200"/></svg>
<svg style="left:1035px;top:787px" width="15" height="11" viewBox="0 0 15 11" fill="none" stroke="#6b5d2e" stroke-width="1.200"><path d="M0.500 0.500l6.500 9M7 0.500l-6.500 9"/><path d="M11.500 0.500v8.500M9 6.500l2.500 2.700 2.500-2.700"/></svg>
<div class="lg" style="top:822px"> rendered with v-for should have explicit keys. See <a>https://vuejs.org/guide/list.html#key</a> for more info.</div>
<div class="lg" style="top:842px"><span class="tm">12:30:52.801</span>   App running at:</div>
<div class="lg" style="top:862px"><span class="tm">12:30:52.803</span>   - Local:   <a>http://localhost:8080/h5/</a></div>
<div class="lg" style="top:882px"><span class="tm">12:30:52.804</span>   - Network: <a>http://192.168.0.110:8080/h5/</a></div>
<div class="lg" style="top:902px"><span class="tm">12:30:52.807</span> <span class="dk"><span class="k">项目</span> 'mi_ning' <span class="k">编译成功。前端运行日志，请另行在浏览器的控制台查看。</span></span></div>
<div class="lg" style="top:922px"><span class="tm">12:30:52.807</span> <span class="or"><span class="k">点击控制台右上角</span>debug<span class="k">图标（红色虫子），可开启断点调试（添加断点：双击编辑器行号添加断点）</span></span></div>
<div class="lg" style="top:942px"><span class="tm">12:30:52.820</span> <span class="or">H5<span class="k">版常见问题参考：</span></span><a>https://ask.dcloud.net.cn/article/35232</a></div>
<div class="abs" id="status"></div>
<svg style="left:29px;top:968px" width="14" height="14" viewBox="0 0 14 14" fill="none"><circle cx="7" cy="7" r="6.300" stroke="#b0b0b0" stroke-width="1"/><circle cx="7" cy="5.300" r="2.200" fill="#b0b0b0"/><path d="M2.800 11.500c.6-2.600 2.300-3.500 4.200-3.500s3.600.9 4.200 3.500" fill="#b0b0b0"/></svg>
<div class="t st" style="left:48px;color:#2fa24f">未登录</div>
<svg style="left:145px;top:969px" width="13" height="11" viewBox="0 0 13 11" fill="none" stroke="#9a8654" stroke-width="1"><rect x="0.500" y="0.500" width="2" height="2"/><rect x="0.500" y="4.500" width="2" height="2"/><rect x="0.500" y="8.500" width="2" height="2"/><path d="M4.500 1.500h8M4.500 5.500h8M4.500 9.500h8"/></svg>
<svg style="left:170px;top:969px" width="13" height="11" viewBox="0 0 13 11" fill="none" stroke="#8a7a3c" stroke-width="1"><rect x="0.500" y="0.500" width="12" height="10"/><path d="M3 3l2.500 2.500L3 8M6.500 8h3"/></svg>
<svg style="left:195px;top:967px" width="16" height="14" viewBox="0 0 16 14" fill="none" stroke="#b99a52" stroke-width="1"><circle cx="6.500" cy="6.500" r="5.500"/><path d="M1 6.500h11M6.500 1c-2.800 2.800-2.800 8.200 0 11M6.500 1c2.800 2.800 2.800 8.200 0 11"/><path d="M9 12.500h5a1.800 1.800 0 0 0 0-3.800a2.600 2.600 0 0 0-5 .6a1.700 1.700 0 0 0 0 3.200z" fill="#fffefa"/></svg>
<div class="t st" style="left:1073px">语法提示库</div><div class="t st" style="left:1159px">行:1</div><div class="t st" style="left:1191px">列:1</div><div class="t st" style="left:1239px">UTF-8</div><div class="t st" style="left:1299px">JavaScript</div><svg style="left:1376px;top:968px" width="15" height="14" viewBox="0 0 15 14"><circle cx="6.500" cy="7.500" r="6" fill="#9a8654"/><path d="M6.500 4v4.500M4.300 7l2.200 2.300L8.700 7" stroke="#fffefa" stroke-width="1.200" fill="none"/><circle cx="12" cy="2.800" r="2.500" fill="#e8322d"/></svg>
<svg style="left:1406px;top:968px" width="13" height="14" viewBox="0 0 13 14"><path d="M6.500 0.500c3 0 4 2.500 4 5v3l1.800 2.500H0.700L2.500 8.500v-3c0-2.500 1-5 4-5z" fill="#9a8654"/><path d="M5 12.300h3a1.500 1.500 0 0 1-3 0z" fill="#9a8654"/></svg>
<div class="abs" id="bt"></div><div class="abs" id="bl"></div><div class="abs" id="br"></div><div class="abs" id="bb"></div>
<div class="wm wc" style="left:101px;top:219px">海外源码</div><div class="wm wl" style="left:226px;top:216px">haiwaiym.com</div>
<div class="wm wc" style="left:956px;top:629px">海外源码</div><div class="wm wl" style="left:1081px;top:626px">haiwaiym.com</div>
<svg style="left:303px;top:393px" width="17" height="35" viewBox="0 0 17 35" fill="none"><path d="M0 0.500A16.200 17 0 0 1 0 34.500" fill="#fffae8" stroke="#e3dab6" stroke-width="1"/><path d="M6.800 13.500l-4.600 4.300 4.600 4.300" stroke="#dcd2a8" stroke-width="1.700"/></svg>

</div>
</body></html>
